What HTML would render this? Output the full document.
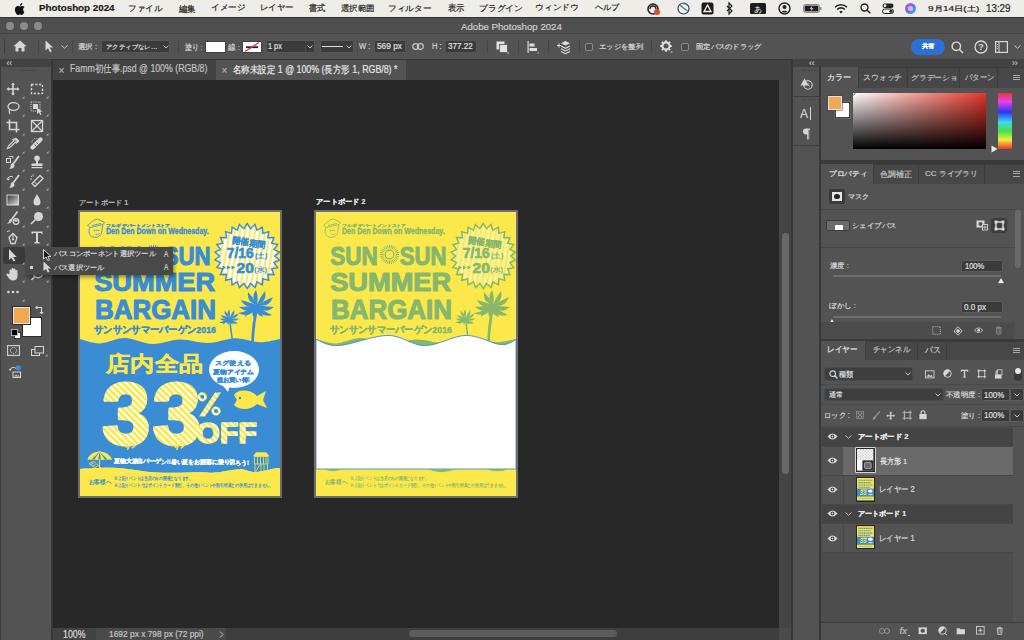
<!DOCTYPE html>
<html><head><meta charset="utf-8">
<style>
*{margin:0;padding:0;box-sizing:border-box}
html,body{width:1024px;height:640px;overflow:hidden;background:#282828;font-family:"Liberation Sans",sans-serif;}
.a{position:absolute}
.t{position:absolute;white-space:nowrap;line-height:1;-webkit-text-stroke:0.2px currentColor}
svg{position:absolute;overflow:visible}
</style></head><body>
<div class="a" style="left:0px;top:0px;width:1024px;height:17px;background:#efede8;"></div>
<div class="a" style="left:0px;top:17px;width:1024px;height:16px;background:#4f4f4f;border-top:1px solid #353535"></div>
<div class="a" style="left:0px;top:33px;width:1024px;height:26px;background:#535353;border-top:1px solid #454545"></div>
<div class="a" style="left:0px;top:59px;width:51px;height:581px;background:#535353;border-left:1px solid #3c3c3c"></div>
<div class="a" style="left:0px;top:59px;width:51px;height:8px;background:#424242;"></div>
<div class="a" style="left:51px;top:59px;width:2px;height:581px;background:#383838;"></div>
<div class="a" style="left:53px;top:59px;width:726px;height:21px;background:#424242;border-top:1px solid #383838"></div>
<div class="a" style="left:216px;top:60px;width:190px;height:20px;background:#535353;"></div>
<div class="a" style="left:53px;top:80px;width:726px;height:548px;background:#282828;"></div>
<div class="a" style="left:53px;top:628px;width:173px;height:12px;background:#424242;"></div>
<div class="a" style="left:95.8px;top:628px;width:130.6px;height:12px;background:#4a4a4a;"></div>
<div class="a" style="left:226px;top:628px;width:553px;height:12px;background:#3e3e3e;"></div>
<div class="a" style="left:409px;top:630px;width:208px;height:7px;background:#5c5c5c;border-radius:3.5px"></div>
<div class="a" style="left:779px;top:59px;width:12px;height:21px;background:#424242;border-top:1px solid #383838"></div>
<div class="a" style="left:779px;top:80px;width:12px;height:548px;background:#454545;"></div>
<div class="a" style="left:779px;top:628px;width:12px;height:12px;background:#4a4a4a;"></div>
<div class="a" style="left:781.7px;top:232.8px;width:7px;height:240.8px;background:#686868;border-radius:3.5px"></div>
<div class="a" style="left:791px;top:59px;width:2px;height:581px;background:#383838;"></div>
<div class="a" style="left:793px;top:59px;width:231px;height:8px;background:#424242;"></div>
<div class="a" style="left:793px;top:67px;width:26px;height:573px;background:#535353;"></div>
<div class="a" style="left:793px;top:96px;width:26px;height:1px;background:#3e3e3e;"></div>
<div class="a" style="left:819px;top:67px;width:2px;height:573px;background:#383838;"></div>
<div class="a" style="left:821px;top:67px;width:203px;height:573px;background:#535353;"></div>
<svg style="left:15px;top:3px;" width="10" height="12" viewBox="0 0 10 12"><path d="M8.2 6.4c0-1.5 1.2-2.2 1.3-2.3-.7-1-1.8-1.2-2.2-1.2-.9-.1-1.8.6-2.3.6-.5 0-1.2-.5-2-.5C1.9 3 .9 3.6.4 4.6c-1 1.8-.3 4.4.7 5.8.5.7 1 1.5 1.8 1.5.7 0 1-.5 1.9-.5.9 0 1.1.5 1.9.5.8 0 1.3-.7 1.8-1.4.6-.8.8-1.6.8-1.6S8.2 8.3 8.2 6.4zM6.7 1.9C7.1 1.4 7.4.7 7.3 0c-.6 0-1.4.4-1.8.9-.4.4-.7 1.1-.6 1.8.7.1 1.4-.3 1.8-.8z" fill="#111"/></svg>
<span id="t1" class="t" style="left:38.68px;top:2.98px;font-size:9.86px;color:#1a1a1a;font-weight:bold;transform:scaleX(0.9935);transform-origin:0 0;">Photoshop 2024</span>
<span id="t2" class="t" style="left:128.48px;top:4.99px;font-size:7.72px;color:#1f1f1f;font-weight:normal;transform:scaleX(1.0703);transform-origin:0 0;">ファイル</span>
<span id="t3" class="t" style="left:178.65px;top:4.66px;font-size:8.92px;color:#1f1f1f;font-weight:normal;transform:scaleX(0.9299);transform-origin:0 0;">編集</span>
<span id="t4" class="t" style="left:211.26px;top:3.87px;font-size:7.82px;color:#1f1f1f;font-weight:normal;transform:scaleX(1.0760);transform-origin:0 0;">イメージ</span>
<span id="t5" class="t" style="left:259.52px;top:3.87px;font-size:7.82px;color:#1f1f1f;font-weight:normal;transform:scaleX(1.0610);transform-origin:0 0;">レイヤー</span>
<span id="t6" class="t" style="left:308.72px;top:4.16px;font-size:8.92px;color:#1f1f1f;font-weight:normal;transform:scaleX(0.9196);transform-origin:0 0;">書式</span>
<span id="t7" class="t" style="left:341.00px;top:3.73px;font-size:8.42px;color:#1f1f1f;font-weight:normal;transform:scaleX(1.0551);transform-origin:0 0;">選択範囲</span>
<span id="t8" class="t" style="left:388.33px;top:4.80px;font-size:8.26px;color:#1f1f1f;font-weight:normal;transform:scaleX(1.0842);transform-origin:0 0;">フィルター</span>
<span id="t9" class="t" style="left:448.00px;top:3.72px;font-size:8.50px;color:#1f1f1f;font-weight:normal;transform:scaleX(0.9259);transform-origin:0 0;">表示</span>
<span id="t10" class="t" style="left:478.60px;top:4.84px;font-size:8.04px;color:#1f1f1f;font-weight:normal;transform:scaleX(1.0963);transform-origin:0 0;">プラグイン</span>
<span id="t11" class="t" style="left:535.31px;top:4.48px;font-size:8.12px;color:#1f1f1f;font-weight:normal;transform:scaleX(1.0978);transform-origin:0 0;">ウィンドウ</span>
<span id="t12" class="t" style="left:595.17px;top:4.37px;font-size:7.82px;color:#1f1f1f;font-weight:normal;transform:scaleX(1.0228);transform-origin:0 0;">ヘルプ</span>
<span id="t13" class="t" style="left:928.00px;top:4.52px;font-size:7.49px;color:#1f1f1f;font-weight:normal;transform:scaleX(1.3355);transform-origin:0 0;">9月14日(土)</span>
<span id="t14" class="t" style="left:986.27px;top:2.97px;font-size:10.51px;color:#1f1f1f;font-weight:normal;transform:scaleX(0.9319);transform-origin:0 0;">13:29</span>
<svg style="left:647px;top:3px;" width="14" height="12" viewBox="0 0 14 12"><circle cx="6" cy="6" r="5" fill="none" stroke="#222" stroke-width="1.6"/><path d="M3 6a3 3 0 0 1 6 0" fill="none" stroke="#222" stroke-width="1.3"/><circle cx="10" cy="9" r="3" fill="#e8472c"/></svg>
<svg style="left:677px;top:2px;" width="13" height="13" viewBox="0 0 13 13"><circle cx="6.5" cy="6.5" r="5.5" fill="#f4f4f4" stroke="#2b3f7a" stroke-width="1.2"/><path d="M3 3.5c2 .5 2.5 2 4 3s2.5 1 3.5 2.5" stroke="#3a8a5a" stroke-width="1.3" fill="none"/><path d="M6 1.5c1.5 1 3 .8 4.5 2" stroke="#5a7ac0" stroke-width="1" fill="none"/></svg>
<svg style="left:701px;top:2px;" width="13" height="13" viewBox="0 0 13 13"><rect x="0.5" y="0.5" width="12" height="12" rx="2" fill="#1c1c1c"/><path d="M6.5 3 L10 9.5 H3z" fill="none" stroke="#fff" stroke-width="1.3"/></svg>
<svg style="left:726px;top:2px;" width="8" height="13" viewBox="0 0 8 13"><path d="M1 4l5 5-3 3V1l3 3-5 5" fill="none" stroke="#222" stroke-width="1.2"/></svg>
<svg style="left:750px;top:3px;" width="16" height="11" viewBox="0 0 16 11"><rect x="0" y="0" width="16" height="11" rx="1.5" fill="#1c1c1c"/><text x="8" y="8.6" font-size="8" text-anchor="middle" fill="#fff">あ</text></svg>
<svg style="left:778px;top:2px;" width="13" height="13" viewBox="0 0 13 13"><circle cx="6.5" cy="6.5" r="5.5" fill="none" stroke="#222" stroke-width="1.4"/><circle cx="6.5" cy="5" r="2" fill="#222"/><path d="M3 10.5c1.5-2.5 5.5-2.5 7 0" fill="#222"/></svg>
<svg style="left:803px;top:4px;" width="19" height="9" viewBox="0 0 19 9"><rect x="0.5" y="0.5" width="16" height="8" rx="2" fill="#bdbdbd" stroke="#777" stroke-width="0.8"/><rect x="1.7" y="1.7" width="13.6" height="5.6" rx="1.2" fill="#1e1e1e"/><rect x="17.2" y="3" width="1.4" height="3" rx="0.5" fill="#888"/><path d="M9.8 1.6L6.5 4.8H8.8L7.3 7.6L10.6 4.2H8.3z" fill="#f0f0f0"/></svg>
<svg style="left:834px;top:3px;" width="14" height="11" viewBox="0 0 14 11"><path d="M1 4.2a8.5 8.5 0 0 1 12 0" fill="none" stroke="#222" stroke-width="1.6"/><path d="M3.2 6.5a5.3 5.3 0 0 1 7.6 0" fill="none" stroke="#222" stroke-width="1.6"/><path d="M5.3 8.8a2.3 2.3 0 0 1 3.4 0L7 10.5z" fill="#222"/></svg>
<svg style="left:860px;top:3px;" width="11" height="11" viewBox="0 0 11 11"><circle cx="4.5" cy="4.5" r="3.5" fill="none" stroke="#222" stroke-width="1.4"/><path d="M7 7l3.3 3.3" stroke="#222" stroke-width="1.5"/></svg>
<svg style="left:882px;top:3px;" width="12" height="11" viewBox="0 0 12 11"><rect x="0.5" y="0.5" width="11" height="4.5" rx="2.25" fill="#222"/><circle cx="3" cy="2.75" r="1.4" fill="#efede8"/><rect x="0.5" y="6" width="11" height="4.5" rx="2.25" fill="none" stroke="#222"/><circle cx="9" cy="8.25" r="1.6" fill="#222"/></svg>
<svg style="left:904px;top:2px;" width="13" height="13" viewBox="0 0 13 13"><defs><linearGradient id="sg" x1="0" y1="0" x2="1" y2="1"><stop offset="0" stop-color="#e24dd0"/><stop offset="0.5" stop-color="#6b6bf0"/><stop offset="1" stop-color="#38c6e8"/></linearGradient></defs><circle cx="6.5" cy="6.5" r="5.5" fill="url(#sg)"/><circle cx="6.5" cy="6.5" r="2.5" fill="#fff" opacity="0.6"/></svg>
<div class="a" style="left:6px;top:21.5px;width:8px;height:8px;background:#8a8a8a;border-radius:50%"></div>
<div class="a" style="left:20px;top:21.5px;width:8px;height:8px;background:#8a8a8a;border-radius:50%"></div>
<div class="a" style="left:34px;top:21.5px;width:8px;height:8px;background:#8a8a8a;border-radius:50%"></div>
<span id="t15" class="t" style="left:461.00px;top:21.98px;font-size:9.86px;color:#cfcfcf;font-weight:normal;transform:scaleX(0.9799);transform-origin:0 0;">Adobe Photoshop 2024</span>
<div class="a" style="left:4px;top:39px;width:1px;height:14px;background:#3f3f3f;"></div>
<div class="a" style="left:37.5px;top:39px;width:1px;height:14px;background:#474747;"></div>
<div class="a" style="left:72px;top:39px;width:1px;height:14px;background:#474747;"></div>
<svg style="left:13px;top:40px;" width="14" height="12" viewBox="0 0 14 12"><path d="M7 0.5 L13.5 6.2 H11.5 V11.5 H8.5 V8 H5.5 V11.5 H2.5 V6.2 H0.5z" fill="#d6d6d6"/></svg>
<svg style="left:45px;top:40px;" width="9" height="13" viewBox="0 0 9 13"><path d="M0.5 0.5 V10.5 L3 8.3 L5 12.3 L6.8 11.5 L4.8 7.5 H8.2z" fill="#d6d6d6"/></svg>
<svg style="left:61px;top:45px;" width="7" height="4" viewBox="0 0 7 4"><path d="M0.5 0.5 L3.5 3.2 L6.5 0.5" fill="none" stroke="#c8c8c8" stroke-width="1"/></svg>
<span id="t16" class="t" style="left:77.59px;top:43.18px;font-size:7.42px;color:#d6d6d6;font-weight:normal;transform:scaleX(1.0602);transform-origin:0 0;">選択 :</span>
<div class="a" style="left:101px;top:40px;width:69px;height:13px;background:#3b3b3b;border-radius:2px;border:1px solid #575757"></div>
<span id="t17" class="t" style="left:105.59px;top:44.35px;font-size:6.47px;color:#dedede;font-weight:normal;transform:scaleX(1.0625);transform-origin:0 0;">アクティブなレ…</span>
<svg style="left:163px;top:45px;" width="6" height="4" viewBox="0 0 6 4"><path d="M0.5 0.5 L3 3 L5.5 0.5" fill="none" stroke="#c8c8c8" stroke-width="1"/></svg>
<div class="a" style="left:178px;top:39px;width:1px;height:14px;background:#474747;"></div>
<span id="t18" class="t" style="left:185.00px;top:43.52px;font-size:7.83px;color:#d6d6d6;font-weight:normal;transform:scaleX(0.8616);transform-origin:0 0;">塗り :</span>
<div class="a" style="left:204.5px;top:40.5px;width:21px;height:12px;background:#414141;border-radius:2px"></div>
<div class="a" style="left:205.5px;top:41.5px;width:19px;height:10px;background:#ffffff;"></div>
<span id="t19" class="t" style="left:228.00px;top:44.02px;font-size:7.83px;color:#d6d6d6;font-weight:normal;transform:scaleX(0.9663);transform-origin:0 0;">線 :</span>
<div class="a" style="left:241.5px;top:40.5px;width:20px;height:12px;background:#414141;border-radius:2px"></div>
<svg style="left:242.5px;top:41.5px;" width="18" height="10" viewBox="0 0 18 10"><rect width="18" height="10" fill="#fff"/><rect x="3" y="4.3" width="12" height="1.8" fill="#222"/><path d="M16 0.5 L2 9.5" stroke="#e03030" stroke-width="1.2"/></svg>
<div class="a" style="left:265.5px;top:40px;width:49px;height:13px;background:#3b3b3b;border-radius:2px;border:1px solid #575757"></div>
<div class="a" style="left:304.5px;top:41px;width:1px;height:11px;background:#4a4a4a;"></div>
<span id="t20" class="t" style="left:268.13px;top:41.38px;font-size:9.51px;color:#e0e0e0;font-weight:normal;transform:scaleX(0.7683);transform-origin:0 0;">1 px</span>
<svg style="left:307px;top:45px;" width="6" height="4" viewBox="0 0 6 4"><path d="M0.5 0.5 L3 3 L5.5 0.5" fill="none" stroke="#c8c8c8" stroke-width="1"/></svg>
<div class="a" style="left:319.5px;top:40px;width:34px;height:13px;background:#3b3b3b;border-radius:2px;border:1px solid #575757"></div>
<div class="a" style="left:322px;top:46px;width:21px;height:1.3px;background:#e0e0e0;"></div>
<svg style="left:346px;top:45px;" width="6" height="4" viewBox="0 0 6 4"><path d="M0.5 0.5 L3 3 L5.5 0.5" fill="none" stroke="#c8c8c8" stroke-width="1"/></svg>
<div class="a" style="left:357px;top:39px;width:1px;height:14px;background:#474747;"></div>
<span id="t21" class="t" style="left:359.00px;top:41.94px;font-size:9.11px;color:#d6d6d6;font-weight:normal;transform:scaleX(0.8342);transform-origin:0 0;">W :</span>
<div class="a" style="left:374px;top:40px;width:32px;height:13px;background:#3b3b3b;border-radius:2px;border:1px solid #575757"></div>
<span id="t22" class="t" style="left:377.00px;top:42.32px;font-size:9.27px;color:#e0e0e0;font-weight:normal;transform:scaleX(0.8972);transform-origin:0 0;">569 px</span>
<svg style="left:412px;top:43px;" width="12" height="7" viewBox="0 0 12 7"><rect x="0.7" y="0.7" width="6" height="5.6" rx="2.8" fill="none" stroke="#c8c8c8" stroke-width="1.2"/><rect x="5.3" y="0.7" width="6" height="5.6" rx="2.8" fill="none" stroke="#c8c8c8" stroke-width="1.2"/></svg>
<span id="t23" class="t" style="left:432.00px;top:41.94px;font-size:9.11px;color:#d6d6d6;font-weight:normal;transform:scaleX(0.8228);transform-origin:0 0;">H :</span>
<div class="a" style="left:444.5px;top:40px;width:32.5px;height:13px;background:#3b3b3b;border-radius:2px;border:1px solid #575757"></div>
<span id="t24" class="t" style="left:447.56px;top:41.94px;font-size:9.11px;color:#e0e0e0;font-weight:normal;transform:scaleX(0.8862);transform-origin:0 0;">377.22</span>
<div class="a" style="left:486.5px;top:39px;width:1px;height:14px;background:#474747;"></div>
<svg style="left:496px;top:41px;" width="13" height="13" viewBox="0 0 13 13"><rect x="0.5" y="0.5" width="8" height="8" fill="#e0e0e0"/><rect x="3.5" y="3.5" width="8" height="8" fill="#e0e0e0" stroke="#535353" stroke-width="0.8"/><rect x="11" y="11.5" width="2" height="1" fill="#ccc"/></svg>
<div class="a" style="left:517.5px;top:39px;width:1px;height:14px;background:#474747;"></div>
<svg style="left:527px;top:41px;" width="12" height="13" viewBox="0 0 12 13"><rect x="0.5" y="0" width="1.2" height="12" fill="#ddd"/><rect x="2.5" y="2.5" width="5" height="3" fill="#ddd"/><rect x="2.5" y="7" width="7.5" height="3" fill="#ddd"/><rect x="10.5" y="11.5" width="1.5" height="1" fill="#ccc"/></svg>
<div class="a" style="left:548px;top:39px;width:1px;height:14px;background:#474747;"></div>
<svg style="left:556px;top:40px;" width="15" height="14" viewBox="0 0 15 14"><path d="M1 5.5h4M3 3.5v4" stroke="#ddd" stroke-width="1"/><path d="M9.5 1L14 3.3 9.5 5.6 5 3.3z" fill="#ddd"/><path d="M5 6l4.5 2.3L14 6M5 8.7l4.5 2.3L14 8.7M5 11.4l4.5 2.3L14 11.4" fill="none" stroke="#ddd" stroke-width="1.1"/></svg>
<div class="a" style="left:579px;top:39px;width:1px;height:14px;background:#474747;"></div>
<div class="a" style="left:584.5px;top:42.5px;width:8px;height:8px;background:#4a4a4a;border:1px solid #8a8a8a;border-radius:2px"></div>
<span id="t25" class="t" style="left:598.80px;top:42.70px;font-size:6.99px;color:#d6d6d6;font-weight:normal;transform:scaleX(1.0522);transform-origin:0 0;">エッジを整列</span>
<div class="a" style="left:651px;top:39px;width:1px;height:14px;background:#474747;"></div>
<svg style="left:660px;top:40px;" width="13" height="13" viewBox="0 0 13 13"><g transform="translate(6,6)"><circle r="3.6" fill="none" stroke="#ddd" stroke-width="2.2"/><g stroke="#ddd" stroke-width="1.8"><path d="M0-5.8V-3.8M0 5.8V3.8M-5.8 0H-3.8M5.8 0H3.8M-4.1-4.1l1.4 1.4M4.1 4.1l-1.4-1.4M-4.1 4.1l1.4-1.4M4.1-4.1l-1.4 1.4"/></g></g><rect x="10.5" y="11.5" width="2" height="1" fill="#ccc"/></svg>
<div class="a" style="left:680.5px;top:42.5px;width:8px;height:8px;background:#4a4a4a;border:1px solid #8a8a8a;border-radius:2px"></div>
<span id="t26" class="t" style="left:695.97px;top:43.12px;font-size:7.46px;color:#d6d6d6;font-weight:normal;transform:scaleX(1.0387);transform-origin:0 0;">固定パスのドラッグ</span>
<div class="a" style="left:911px;top:38.5px;width:33.5px;height:16px;background:#2c6fd6;border-radius:8px"></div>
<span id="t27" class="t" style="left:921.67px;top:43.38px;font-size:6.42px;color:#ffffff;font-weight:bold;transform:scaleX(1.0645);transform-origin:0 0;">共有</span>
<svg style="left:951px;top:41px;" width="13" height="13" viewBox="0 0 13 13"><circle cx="5.3" cy="5.3" r="4.2" fill="none" stroke="#d8d8d8" stroke-width="1.4"/><path d="M8.3 8.3L12 12" stroke="#d8d8d8" stroke-width="1.6"/></svg>
<svg style="left:974px;top:40px;" width="14" height="14" viewBox="0 0 14 14"><circle cx="7" cy="7" r="6" fill="none" stroke="#d8d8d8" stroke-width="1.3"/><text x="7" y="10.3" font-size="9" font-weight="bold" text-anchor="middle" fill="#d8d8d8" font-family="Liberation Sans">?</text></svg>
<svg style="left:995px;top:41px;" width="13" height="12" viewBox="0 0 13 12"><rect x="0.6" y="0.6" width="11.8" height="10.8" fill="none" stroke="#d8d8d8" stroke-width="1.2"/><path d="M4 1V11" stroke="#d8d8d8" stroke-width="1"/><path d="M1.8 3.5H3M1.8 5.5H3M1.8 7.5H3" stroke="#d8d8d8" stroke-width="0.8"/></svg>
<svg style="left:1014px;top:45px;" width="7" height="4" viewBox="0 0 7 4"><path d="M0.5 0.5 L3.5 3.2 L6.5 0.5" fill="none" stroke="#c8c8c8" stroke-width="1"/></svg>
<span id="t28" class="t" style="left:58.50px;top:66.03px;font-size:10.00px;color:#b5b5b5;font-weight:normal;">×</span>
<span id="t29" class="t" style="left:70.16px;top:64.44px;font-size:10.43px;color:#c4c4c4;font-weight:normal;transform:scaleX(0.8408);transform-origin:0 0;">Famm初仕事.psd @ 100% (RGB/8)</span>
<span id="t30" class="t" style="left:221.50px;top:66.03px;font-size:10.00px;color:#b5b5b5;font-weight:normal;">×</span>
<span id="t31" class="t" style="left:233.18px;top:64.94px;font-size:10.43px;color:#e8e8e8;font-weight:normal;transform:scaleX(0.8465);transform-origin:0 0;">名称未設定 1 @ 100% (長方形 1, RGB/8) *</span>
<span id="t32" class="t" style="left:6.50px;top:58.80px;font-size:8.50px;color:#c0c0c0;font-weight:normal;">‹‹</span>
<span id="t33" class="t" style="left:809.00px;top:58.80px;font-size:8.50px;color:#c0c0c0;font-weight:normal;">‹‹</span>
<span id="t34" class="t" style="left:1012.00px;top:58.80px;font-size:8.50px;color:#c0c0c0;font-weight:normal;">››</span>
<div class="a" style="left:19px;top:70px;width:2px;height:1px;background:#444;"></div>
<div class="a" style="left:802px;top:70px;width:2px;height:1px;background:#444;"></div>
<div class="a" style="left:802px;top:99px;width:2px;height:1px;background:#444;"></div>
<div class="a" style="left:22px;top:70px;width:2px;height:1px;background:#444;"></div>
<div class="a" style="left:805px;top:70px;width:2px;height:1px;background:#444;"></div>
<div class="a" style="left:805px;top:99px;width:2px;height:1px;background:#444;"></div>
<div class="a" style="left:25px;top:70px;width:2px;height:1px;background:#444;"></div>
<div class="a" style="left:808px;top:70px;width:2px;height:1px;background:#444;"></div>
<div class="a" style="left:808px;top:99px;width:2px;height:1px;background:#444;"></div>
<div class="a" style="left:28px;top:70px;width:2px;height:1px;background:#444;"></div>
<div class="a" style="left:811px;top:70px;width:2px;height:1px;background:#444;"></div>
<div class="a" style="left:811px;top:99px;width:2px;height:1px;background:#444;"></div>
<div class="a" style="left:31px;top:70px;width:2px;height:1px;background:#444;"></div>
<div class="a" style="left:814px;top:70px;width:2px;height:1px;background:#444;"></div>
<div class="a" style="left:814px;top:99px;width:2px;height:1px;background:#444;"></div>
<div class="a" style="left:34px;top:70px;width:2px;height:1px;background:#444;"></div>
<div class="a" style="left:817px;top:70px;width:2px;height:1px;background:#444;"></div>
<div class="a" style="left:817px;top:99px;width:2px;height:1px;background:#444;"></div>
<div class="a" style="left:3px;top:247px;width:21.5px;height:16.5px;background:#3b3b3b;border-radius:2px"></div>
<svg style="left:6px;top:82px;" width="14" height="14" viewBox="0 0 14 14"><path d="M7 0.5L9 2.8H7.8V6.2H11.2V5L13.5 7 11.2 9V7.8H7.8V11.2H9L7 13.5 5 11.2H6.2V7.8H2.8V9L0.5 7 2.8 5V6.2H6.2V2.8H5z" fill="#d6d6d6"/></svg>
<svg style="left:30px;top:82px;" width="14" height="14" viewBox="0 0 14 14"><rect x="1.5" y="2.5" width="11" height="9" fill="none" stroke="#d6d6d6" stroke-width="1.4" stroke-dasharray="2.2 1.6"/></svg>
<svg style="left:6px;top:100.5px;" width="14" height="14" viewBox="0 0 14 14"><ellipse cx="7.5" cy="5.5" rx="5.5" ry="3.8" fill="none" stroke="#d6d6d6" stroke-width="1.3"/><path d="M3.5 8.5c-1 1.5 0 3 .5 4.5" fill="none" stroke="#d6d6d6" stroke-width="1.2"/></svg>
<svg style="left:30px;top:100.5px;" width="14" height="14" viewBox="0 0 14 14"><rect x="1" y="1" width="9" height="9" fill="none" stroke="#d6d6d6" stroke-width="0.9" stroke-dasharray="1.2 1"/><rect x="3" y="3" width="5" height="5" fill="#d6d6d6"/><path d="M7 6.5V13L8.8 11.3 10.3 14 11.5 13.3 10 10.8H12.5z" fill="#d6d6d6"/></svg>
<svg style="left:6px;top:119px;" width="14" height="14" viewBox="0 0 14 14"><path d="M3.5 0.5V10.5H13.5M0.5 3.5H10.5V13.5" fill="none" stroke="#d6d6d6" stroke-width="1.6"/></svg>
<svg style="left:30px;top:119px;" width="14" height="14" viewBox="0 0 14 14"><rect x="1.5" y="1.5" width="11" height="11" fill="none" stroke="#d6d6d6" stroke-width="1.3"/><path d="M1.5 1.5L12.5 12.5M12.5 1.5L1.5 12.5" stroke="#d6d6d6" stroke-width="1.3"/></svg>
<svg style="left:6px;top:137px;" width="14" height="14" viewBox="0 0 14 14"><path d="M10 1.5l2.5 2.5-2 2-1-1-5.5 5.5-2.5 1 1-2.5 5.5-5.5-1-1z" fill="none" stroke="#d6d6d6" stroke-width="1.2"/><path d="M9 1.5l3.5 3.5" stroke="#d6d6d6" stroke-width="2.2"/></svg>
<svg style="left:30px;top:137px;" width="14" height="14" viewBox="0 0 14 14"><path d="M2.5 10.5L10.5 2.5" stroke="#d6d6d6" stroke-width="4.2" stroke-linecap="round"/><path d="M4.5 7.5l2 2M6.5 5.5l2 2" stroke="#535353" stroke-width="0.9"/><path d="M2 5.5a4 4 0 0 1 5-4" fill="none" stroke="#d6d6d6" stroke-width="0.9" stroke-dasharray="1 1"/></svg>
<svg style="left:6px;top:155px;" width="14" height="14" viewBox="0 0 14 14"><rect x="0.5" y="3.5" width="4" height="4" fill="none" stroke="#d6d6d6" stroke-width="1"/><path d="M3 1.5h4v2" fill="none" stroke="#d6d6d6" stroke-width="0.9"/><path d="M13 1L7.5 8.5" stroke="#d6d6d6" stroke-width="1.8"/><path d="M7.5 8c-2 0-3 1.5-3 3.5 0 1-.8 1.8-1.5 2.2 3 .5 5.5-.8 5.5-3.5z" fill="#d6d6d6"/></svg>
<svg style="left:30px;top:155px;" width="14" height="14" viewBox="0 0 14 14"><circle cx="7" cy="3.3" r="2.8" fill="#d6d6d6"/><path d="M6 5.5h2v3h4.5v2.5h-11v-2.5H6z" fill="#d6d6d6"/><rect x="1.5" y="12" width="11" height="1.2" fill="#d6d6d6"/></svg>
<svg style="left:6px;top:174px;" width="14" height="14" viewBox="0 0 14 14"><path d="M1 6a4 4 0 0 1 6-3" fill="none" stroke="#d6d6d6" stroke-width="1"/><path d="M1 4.5L2.5 6.5 4 4.5z" fill="#d6d6d6"/><path d="M13 1L7.5 8.5" stroke="#d6d6d6" stroke-width="1.8"/><path d="M7.5 8c-2 0-3 1.5-3 3.5 0 1-.8 1.8-1.5 2.2 3 .5 5.5-.8 5.5-3.5z" fill="#d6d6d6"/></svg>
<svg style="left:30px;top:174px;" width="14" height="14" viewBox="0 0 14 14"><path d="M5 12.5L13 4.5 10 1.5 2 9.5z" fill="none" stroke="#d6d6d6" stroke-width="1.3"/><path d="M4 7.5l3 3" stroke="#d6d6d6" stroke-width="1"/><path d="M1 2l1 1M3 0.5v2M0 5h2" stroke="#d6d6d6" stroke-width="0.9"/></svg>
<svg style="left:6px;top:192.5px;" width="14" height="14" viewBox="0 0 14 14"><defs><linearGradient id="gr1" x1="0" y1="0" x2="1" y2="1"><stop offset="0" stop-color="#333"/><stop offset="1" stop-color="#ddd"/></linearGradient></defs><rect x="1" y="2" width="11.5" height="10" fill="url(#gr1)" stroke="#d6d6d6" stroke-width="1"/></svg>
<svg style="left:30px;top:192.5px;" width="14" height="14" viewBox="0 0 14 14"><path d="M7 1C5 4.5 3.5 6.5 3.5 9a3.5 3.5 0 0 0 7 0C10.5 6.5 9 4.5 7 1z" fill="#d6d6d6"/></svg>
<svg style="left:6px;top:211px;" width="14" height="14" viewBox="0 0 14 14"><path d="M11.5 0.5L6 8" stroke="#d6d6d6" stroke-width="1.6"/><path d="M6 7.5c-2 0-3 1.5-3 3-.5 1-1 1.5-2 2 3 .3 4.5-1 5-3z" fill="#d6d6d6"/><circle cx="10" cy="10.5" r="2.8" fill="none" stroke="#d6d6d6" stroke-width="1.3"/><path d="M8 10.5a2 2 0 0 1 4 0z" fill="#d6d6d6"/></svg>
<svg style="left:30px;top:211px;" width="14" height="14" viewBox="0 0 14 14"><circle cx="8.5" cy="5.5" r="4.5" fill="#d6d6d6"/><path d="M5.5 8.5L1 13" stroke="#d6d6d6" stroke-width="1.6"/></svg>
<svg style="left:6px;top:229.5px;" width="14" height="14" viewBox="0 0 14 14"><path d="M7 3.5L11 7.5 9 13.5H5L3 7.5z" fill="none" stroke="#d6d6d6" stroke-width="1.3"/><path d="M7 3.5V9" stroke="#d6d6d6" stroke-width="1"/><circle cx="7" cy="9.5" r="1" fill="#d6d6d6"/><path d="M1 1l1 1M3 0v2" stroke="#d6d6d6" stroke-width="0.9"/></svg>
<svg style="left:30px;top:229.5px;" width="14" height="14" viewBox="0 0 14 14"><path d="M1.5 1.5H12.5V4H11.5L11 3H8V12H9.5V13.5H4.5V12H6V3H3L2.5 4H1.5z" fill="#d6d6d6"/></svg>
<svg style="left:6px;top:248px;" width="14" height="14" viewBox="0 0 14 14"><path d="M3 1V12L5.5 9.8 7.5 13.6 9.3 12.8 7.3 9.1H10.8z" fill="#d6d6d6"/></svg>
<svg style="left:6px;top:266.5px;" width="14" height="14" viewBox="0 0 14 14"><path d="M3.5 7V3.5a1 1 0 0 1 2 0V6.5V2a1 1 0 0 1 2 0V6.5V2.5a1 1 0 0 1 2 0V7V4a1 1 0 0 1 2 0V9c0 3-2 4.5-4.5 4.5S3.5 12 2 10L.5 8a1 1 0 0 1 1.5-1.3z" fill="#d6d6d6"/></svg>
<svg style="left:6px;top:285px;" width="14" height="14" viewBox="0 0 14 14"><circle cx="2.5" cy="7" r="1.3" fill="#d6d6d6"/><circle cx="7" cy="7" r="1.3" fill="#d6d6d6"/><circle cx="11.5" cy="7" r="1.3" fill="#d6d6d6"/></svg>
<svg style="left:21.5px;top:95.5px;" width="2.5" height="2.5" viewBox="0 0 2.5 2.5"><path d="M2.5 0V2.5H0z" fill="#a8a8a8"/></svg>
<svg style="left:45.5px;top:95.5px;" width="2.5" height="2.5" viewBox="0 0 2.5 2.5"><path d="M2.5 0V2.5H0z" fill="#a8a8a8"/></svg>
<svg style="left:21.5px;top:114.0px;" width="2.5" height="2.5" viewBox="0 0 2.5 2.5"><path d="M2.5 0V2.5H0z" fill="#a8a8a8"/></svg>
<svg style="left:45.5px;top:114.0px;" width="2.5" height="2.5" viewBox="0 0 2.5 2.5"><path d="M2.5 0V2.5H0z" fill="#a8a8a8"/></svg>
<svg style="left:21.5px;top:132.5px;" width="2.5" height="2.5" viewBox="0 0 2.5 2.5"><path d="M2.5 0V2.5H0z" fill="#a8a8a8"/></svg>
<svg style="left:45.5px;top:132.5px;" width="2.5" height="2.5" viewBox="0 0 2.5 2.5"><path d="M2.5 0V2.5H0z" fill="#a8a8a8"/></svg>
<svg style="left:21.5px;top:150.5px;" width="2.5" height="2.5" viewBox="0 0 2.5 2.5"><path d="M2.5 0V2.5H0z" fill="#a8a8a8"/></svg>
<svg style="left:45.5px;top:150.5px;" width="2.5" height="2.5" viewBox="0 0 2.5 2.5"><path d="M2.5 0V2.5H0z" fill="#a8a8a8"/></svg>
<svg style="left:21.5px;top:168.5px;" width="2.5" height="2.5" viewBox="0 0 2.5 2.5"><path d="M2.5 0V2.5H0z" fill="#a8a8a8"/></svg>
<svg style="left:45.5px;top:168.5px;" width="2.5" height="2.5" viewBox="0 0 2.5 2.5"><path d="M2.5 0V2.5H0z" fill="#a8a8a8"/></svg>
<svg style="left:21.5px;top:187.5px;" width="2.5" height="2.5" viewBox="0 0 2.5 2.5"><path d="M2.5 0V2.5H0z" fill="#a8a8a8"/></svg>
<svg style="left:45.5px;top:187.5px;" width="2.5" height="2.5" viewBox="0 0 2.5 2.5"><path d="M2.5 0V2.5H0z" fill="#a8a8a8"/></svg>
<svg style="left:21.5px;top:206.0px;" width="2.5" height="2.5" viewBox="0 0 2.5 2.5"><path d="M2.5 0V2.5H0z" fill="#a8a8a8"/></svg>
<svg style="left:45.5px;top:206.0px;" width="2.5" height="2.5" viewBox="0 0 2.5 2.5"><path d="M2.5 0V2.5H0z" fill="#a8a8a8"/></svg>
<svg style="left:21.5px;top:224.5px;" width="2.5" height="2.5" viewBox="0 0 2.5 2.5"><path d="M2.5 0V2.5H0z" fill="#a8a8a8"/></svg>
<svg style="left:45.5px;top:224.5px;" width="2.5" height="2.5" viewBox="0 0 2.5 2.5"><path d="M2.5 0V2.5H0z" fill="#a8a8a8"/></svg>
<svg style="left:21.5px;top:243.0px;" width="2.5" height="2.5" viewBox="0 0 2.5 2.5"><path d="M2.5 0V2.5H0z" fill="#a8a8a8"/></svg>
<svg style="left:45.5px;top:243.0px;" width="2.5" height="2.5" viewBox="0 0 2.5 2.5"><path d="M2.5 0V2.5H0z" fill="#a8a8a8"/></svg>
<svg style="left:21.5px;top:261.5px;" width="2.5" height="2.5" viewBox="0 0 2.5 2.5"><path d="M2.5 0V2.5H0z" fill="#a8a8a8"/></svg>
<svg style="left:21.5px;top:280.0px;" width="2.5" height="2.5" viewBox="0 0 2.5 2.5"><path d="M2.5 0V2.5H0z" fill="#a8a8a8"/></svg>
<svg style="left:21.5px;top:298.5px;" width="2.5" height="2.5" viewBox="0 0 2.5 2.5"><path d="M2.5 0V2.5H0z" fill="#a8a8a8"/></svg>
<svg style="left:30px;top:268px;" width="14" height="14" viewBox="0 0 14 14"><circle cx="8" cy="5.5" r="4.3" fill="none" stroke="#d6d6d6" stroke-width="1.4"/><path d="M4.8 8.7L1.5 12" stroke="#d6d6d6" stroke-width="1.7"/></svg>
<svg style="left:45.5px;top:280.0px;" width="2.5" height="2.5" viewBox="0 0 2.5 2.5"><path d="M2.5 0V2.5H0z" fill="#a8a8a8"/></svg>
<div class="a" style="left:23px;top:317.8px;width:18px;height:18px;background:#ffffff;outline:1px solid #2e2e2e;box-shadow:0 0 0 1px #2e2e2e"></div>
<div class="a" style="left:12.8px;top:306.8px;width:17.6px;height:17.5px;background:#f2a852;border:1px solid #e6e6e6;box-shadow:0 0 0 1px #2e2e2e"></div>
<svg style="left:35px;top:305px;" width="9" height="10" viewBox="0 0 9 10"><path d="M1 2.5H6.5V8" fill="none" stroke="#d6d6d6" stroke-width="1.1"/><path d="M0 2.5L2.5 0.5V4.5z M4.5 7H8.5L6.5 9.5z" fill="#d6d6d6"/></svg>
<svg style="left:10.5px;top:329px;" width="10" height="10" viewBox="0 0 10 10"><rect x="3.5" y="3.5" width="6" height="6" fill="#fff" stroke="#222" stroke-width="0.8"/><rect x="0.5" y="0.5" width="6" height="6" fill="#000" stroke="#ccc" stroke-width="0.8"/></svg>
<svg style="left:7px;top:345px;" width="13" height="11" viewBox="0 0 13 11"><rect x="0.6" y="0.6" width="11.8" height="9.8" fill="none" stroke="#d6d6d6" stroke-width="1.1"/><circle cx="6.5" cy="5.5" r="3" fill="none" stroke="#d6d6d6" stroke-width="1" stroke-dasharray="1.2 0.8"/></svg>
<svg style="left:30.5px;top:345.5px;" width="13" height="10" viewBox="0 0 13 10"><rect x="0.5" y="3.5" width="8" height="6" fill="#535353" stroke="#d6d6d6" stroke-width="1"/><rect x="4" y="0.5" width="8.5" height="6.5" fill="#535353" stroke="#d6d6d6" stroke-width="1"/></svg>
<svg style="left:44.5px;top:353.5px;" width="2.5" height="2.5" viewBox="0 0 2.5 2.5"><path d="M2.5 0V2.5H0z" fill="#a8a8a8"/></svg>
<svg style="left:7.5px;top:365px;" width="14" height="13" viewBox="0 0 14 13"><path d="M2 5a3.5 3.5 0 0 1 6-1.5" fill="none" stroke="#d6d6d6" stroke-width="1"/><path d="M1 4l1.2 2.2L3.5 4z" fill="#d6d6d6"/><rect x="5" y="7" width="7.5" height="5.5" fill="none" stroke="#d6d6d6" stroke-width="1"/><path d="M6 11.5l2-2 1.5 1.5 1-1 1.5 1.5z" fill="#d6d6d6"/><circle cx="10.3" cy="2.8" r="2.5" fill="#3d8bf0"/></svg>
<svg width="0" height="0" style="left:0;top:0"><defs>
<pattern id="sbB" patternUnits="userSpaceOnUse" width="5" height="60" patternTransform="rotate(10)"><rect width="5" height="60" fill="#ffffff"/><rect width="1.8" height="60" fill="#fbe94b"/></pattern>
<pattern id="sbG" patternUnits="userSpaceOnUse" width="5" height="60" patternTransform="rotate(10)"><rect width="5" height="60" fill="#f7f2a0"/><rect width="1.8" height="60" fill="#fbe94b"/></pattern>
<pattern id="strp" patternUnits="userSpaceOnUse" width="4.6" height="40" patternTransform="rotate(-45)"><rect width="4.6" height="40" fill="#ffffff"/><rect width="2.7" height="40" fill="#fbe94b"/></pattern>
</defs></svg>
<div class="a" style="left:78px;top:210px;width:204px;height:288px;background:#6d6d72;"></div>
<div class="a" style="left:314px;top:210px;width:204px;height:288px;background:#6d6d72;"></div>
<span id="t35" class="t" style="left:79.33px;top:198.55px;font-size:7.19px;color:#cbcbcb;font-weight:normal;transform:scaleX(1.0311);transform-origin:0 0;">アートボード 1</span>
<span id="t36" class="t" style="left:316.30px;top:199.02px;font-size:6.77px;color:#e4e4e4;font-weight:bold;transform:scaleX(1.0359);transform-origin:0 0;">アートボード 2</span>
<svg style="left:80px;top:212px;overflow:hidden" width="200" height="284" viewBox="0 0 200 284"><rect width="200" height="284" fill="#fbe94b"/><path d="M0.00 127.00 C3.33 127.73 12.53 131.57 20.00 131.40 C27.47 131.23 36.02 125.90 44.80 126.00 C53.58 126.10 63.50 131.75 72.70 132.00 C81.90 132.25 90.73 127.67 100.00 127.50 C109.27 127.33 119.03 131.20 128.30 131.00 C137.57 130.80 147.03 126.42 155.60 126.30 C164.17 126.18 172.30 130.18 179.70 130.30 C187.10 130.42 196.62 127.55 200.00 127.00 L200 256.3 C199.17 256.32 199.17 255.78 195.00 256.40 C190.83 257.02 180.83 259.87 175.00 260.00 C169.17 260.13 166.67 257.10 160.00 257.20 C153.33 257.30 141.67 260.08 135.00 260.60 C128.33 261.12 129.67 260.30 120.00 260.30 C110.33 260.30 90.67 261.32 77.00 260.60 C63.33 259.88 50.83 256.62 38.00 256.00 C25.17 255.38 6.33 256.75 0.00 256.90 Z" fill="#3a8dd5"/><g fill="none" stroke="#3a8dd5" stroke-width="0.8" stroke-linejoin="round"><path d="M7.5 13.5 L14 8 L17.5 7 L24.5 10.5 L23 12.5 L10 15.5z"/><path d="M10 15.5 C8 19 9 24 13 25 C18 26.5 22.5 23 22 17 L23 12.5"/><path d="M12 13.5 L21 11.5"/><path d="M16 18.5 q1.5 -1 3 0 M15.5 22 q2 1.2 4 -0.5"/><circle cx="14.5" cy="18.5" r="0.5"/></g><text x="26" y="14.6" font-size="4.3" fill="#3a8dd5" stroke="#3a8dd5" stroke-width="0.15" textLength="64" lengthAdjust="spacingAndGlyphs" font-weight="bold">フルギ デパートメントストア</text><text x="26" y="22" font-size="8.3" fill="#3a8dd5" stroke="#3a8dd5" stroke-width="0.35" textLength="102.7" lengthAdjust="spacingAndGlyphs" font-weight="bold">Den Den Down on Wednesday.</text><text x="14.2" y="52.7" font-size="26.7" font-weight="bold" fill="#3a8dd5" stroke="#3a8dd5" stroke-width="1.1" stroke-linejoin="round" textLength="47.6" lengthAdjust="spacingAndGlyphs">SUN</text><circle cx="73.5" cy="42.5" r="4.4" fill="none" stroke="#3a8dd5" stroke-width="1.3"/><path d="M79.70 42.50L83.10 42.50M79.54 43.88L82.86 44.64M79.09 45.19L82.15 46.67M78.35 46.37L81.01 48.49M77.37 47.35L79.49 50.01M76.19 48.09L77.67 51.15M74.88 48.54L75.64 51.86M73.50 48.70L73.50 52.10M72.12 48.54L71.36 51.86M70.81 48.09L69.33 51.15M69.63 47.35L67.51 50.01M68.65 46.37L65.99 48.49M67.91 45.19L64.85 46.67M67.46 43.88L64.14 44.64M67.30 42.50L63.90 42.50M67.46 41.12L64.14 40.36M67.91 39.81L64.85 38.33M68.65 38.63L65.99 36.51M69.63 37.65L67.51 34.99M70.81 36.91L69.33 33.85M72.12 36.46L71.36 33.14M73.50 36.30L73.50 32.90M74.88 36.46L75.64 33.14M76.19 36.91L77.67 33.85M77.37 37.65L79.49 34.99M78.35 38.63L81.01 36.51M79.09 39.81L82.15 38.33M79.54 41.12L82.86 40.36" stroke="#3a8dd5" stroke-width="0.9"/><text x="83.7" y="52.7" font-size="26.7" font-weight="bold" fill="#3a8dd5" stroke="#3a8dd5" stroke-width="1.1" stroke-linejoin="round" textLength="46.9" lengthAdjust="spacingAndGlyphs">SUN</text><text x="14.2" y="79.3" font-size="25.7" font-weight="bold" fill="#3a8dd5" stroke="#3a8dd5" stroke-width="1.1" stroke-linejoin="round" textLength="121" lengthAdjust="spacingAndGlyphs">SUMMER</text><text x="15" y="107.4" font-size="26.9" font-weight="bold" fill="#3a8dd5" stroke="#3a8dd5" stroke-width="1.1" stroke-linejoin="round" textLength="121" lengthAdjust="spacingAndGlyphs">BARGAIN</text><text x="14.2" y="120.7" font-size="9.5" font-weight="bold" fill="#3a8dd5" stroke="#3a8dd5" stroke-width="0.4" textLength="121.8" lengthAdjust="spacingAndGlyphs">サンサンサマーバーゲン2016</text><polygon points="167.20,11.50 170.51,16.70 174.98,12.44 176.95,18.29 182.30,15.22 182.82,21.37 188.75,19.67 187.78,25.76 193.95,25.54 191.55,31.22 197.59,32.48 193.90,37.42 199.46,40.08 194.70,44.00 199.46,47.92 193.90,50.58 197.59,55.52 191.55,56.78 193.95,62.46 187.78,62.24 188.75,68.33 182.82,66.63 182.30,72.78 176.95,69.71 174.98,75.56 170.51,71.30 167.20,76.50 163.89,71.30 159.42,75.56 157.45,69.71 152.10,72.78 151.58,66.63 145.65,68.33 146.62,62.24 140.45,62.46 142.85,56.78 136.81,55.52 140.50,50.58 134.94,47.92 139.70,44.00 134.94,40.08 140.50,37.42 136.81,32.48 142.85,31.22 140.45,25.54 146.62,25.76 145.65,19.67 151.58,21.37 152.10,15.22 157.45,18.29 159.42,12.44 163.89,16.70" fill="#d8c43a" opacity="0.6" transform="translate(1,1.2)"/><polygon points="167.20,11.50 170.51,16.70 174.98,12.44 176.95,18.29 182.30,15.22 182.82,21.37 188.75,19.67 187.78,25.76 193.95,25.54 191.55,31.22 197.59,32.48 193.90,37.42 199.46,40.08 194.70,44.00 199.46,47.92 193.90,50.58 197.59,55.52 191.55,56.78 193.95,62.46 187.78,62.24 188.75,68.33 182.82,66.63 182.30,72.78 176.95,69.71 174.98,75.56 170.51,71.30 167.20,76.50 163.89,71.30 159.42,75.56 157.45,69.71 152.10,72.78 151.58,66.63 145.65,68.33 146.62,62.24 140.45,62.46 142.85,56.78 136.81,55.52 140.50,50.58 134.94,47.92 139.70,44.00 134.94,40.08 140.50,37.42 136.81,32.48 142.85,31.22 140.45,25.54 146.62,25.76 145.65,19.67 151.58,21.37 152.10,15.22 157.45,18.29 159.42,12.44 163.89,16.70" fill="url(#sbB)" stroke="#3a8dd5" stroke-width="1.4" stroke-linejoin="miter"/><text x="152.3" y="33.5" font-size="8.6" font-weight="bold" fill="#3a8dd5" stroke="#3a8dd5" stroke-width="0.25" textLength="34.2" lengthAdjust="spacingAndGlyphs" transform="rotate(7 169 29)">開催期間</text><text x="146.8" y="46.3" font-size="15.3" font-weight="bold" fill="#3a8dd5" stroke="#3a8dd5" stroke-width="0.7" textLength="26.9" lengthAdjust="spacingAndGlyphs">7/16</text><text x="174.9" y="45.7" font-size="7" font-weight="bold" fill="#3a8dd5" textLength="12.8" lengthAdjust="spacingAndGlyphs">(土)</text><path d="M142.5 53.5 l3.6 2 -3.6 2z M147 53.5 l3.6 2 -3.6 2z M151.5 53.5 l3.6 2 -3.6 2z" fill="#3a8dd5"/><text x="156.6" y="61" font-size="15.3" font-weight="bold" fill="#3a8dd5" stroke="#3a8dd5" stroke-width="0.7" textLength="17.1" lengthAdjust="spacingAndGlyphs">20</text><text x="174.3" y="60.4" font-size="7" font-weight="bold" fill="#3a8dd5" textLength="12.7" lengthAdjust="spacingAndGlyphs">(水)</text><path d="M177.00 93.00 Q168.55 99.49 158.00 101.00 Q171.89 107.41 177.00 93.00 z" fill="#3a8dd5"/><path d="M177.00 93.00 Q169.09 90.21 161.00 88.00 Q166.52 98.42 177.00 93.00 z" fill="#3a8dd5"/><path d="M177.00 93.00 Q173.57 85.76 168.00 80.00 Q166.50 90.66 177.00 93.00 z" fill="#3a8dd5"/><path d="M177.00 93.00 Q178.79 85.35 176.00 78.00 Q170.21 85.92 177.00 93.00 z" fill="#3a8dd5"/><path d="M177.00 93.00 Q187.34 89.62 185.00 79.00 Q179.87 85.36 177.00 93.00 z" fill="#3a8dd5"/><path d="M177.00 93.00 Q188.71 96.42 193.00 85.00 Q184.87 88.73 177.00 93.00 z" fill="#3a8dd5"/><path d="M177.00 93.00 Q184.41 103.24 194.00 95.00 Q185.42 94.70 177.00 93.00 z" fill="#3a8dd5"/><path d="M177.00 93.00 Q178.79 106.57 192.00 103.00 Q183.56 99.41 177.00 93.00 z" fill="#3a8dd5"/><path d="M177.00 93.00 Q165.84 93.84 165.00 105.00 Q171.92 99.92 177.00 93.00 z" fill="#3a8dd5"/><path d="M177.00 93.00 Q169.36 98.08 174.00 106.00 Q177.74 100.02 177.00 93.00 z" fill="#3a8dd5"/><path d="M177.00 93.00 Q173.47 102.26 183.00 105.00 Q181.16 98.42 177.00 93.00 z" fill="#3a8dd5"/><path d="M177.00 93.00 Q168.08 94.70 159.00 95.00 Q169.03 103.24 177.00 93.00 z" fill="#3a8dd5"/><circle cx="177.00" cy="94.00" r="2.50" fill="#3a8dd5"/><path d="M175.70 95.00 Q171.70 112.00 171.20 131.00 L173.80 131.00 Q174.56 112.00 178.30 95.00 z" fill="#3a8dd5"/><path d="M149.70 105.70 Q144.98 109.33 139.08 110.17 Q146.84 113.76 149.70 105.70 z" fill="#3a8dd5"/><path d="M149.70 105.70 Q145.28 104.14 140.76 102.91 Q143.85 108.73 149.70 105.70 z" fill="#3a8dd5"/><path d="M149.70 105.70 Q147.78 101.65 144.67 98.44 Q143.83 104.39 149.70 105.70 z" fill="#3a8dd5"/><path d="M149.70 105.70 Q150.70 101.42 149.14 97.32 Q145.91 101.74 149.70 105.70 z" fill="#3a8dd5"/><path d="M149.70 105.70 Q155.48 103.81 154.17 97.88 Q151.30 101.43 149.70 105.70 z" fill="#3a8dd5"/><path d="M149.70 105.70 Q156.24 107.61 158.64 101.23 Q154.10 103.31 149.70 105.70 z" fill="#3a8dd5"/><path d="M149.70 105.70 Q153.84 111.42 159.20 106.82 Q154.40 106.65 149.70 105.70 z" fill="#3a8dd5"/><path d="M149.70 105.70 Q150.70 113.28 158.08 111.29 Q153.36 109.28 149.70 105.70 z" fill="#3a8dd5"/><path d="M149.70 105.70 Q143.46 106.17 142.99 112.41 Q146.86 109.57 149.70 105.70 z" fill="#3a8dd5"/><path d="M149.70 105.70 Q145.43 108.54 148.02 112.96 Q150.11 109.62 149.70 105.70 z" fill="#3a8dd5"/><path d="M149.70 105.70 Q147.73 110.88 153.05 112.41 Q152.03 108.73 149.70 105.70 z" fill="#3a8dd5"/><path d="M149.70 105.70 Q144.71 106.65 139.64 106.82 Q145.24 111.42 149.70 105.70 z" fill="#3a8dd5"/><circle cx="149.70" cy="106.70" r="1.40" fill="#3a8dd5"/><path d="M148.97 107.70 Q149.87 116.85 151.67 128.00 L153.13 128.00 Q151.47 116.85 150.43 107.70 z" fill="#3a8dd5"/><text x="26.4" y="159" font-size="21" font-weight="bold" fill="#fbe94b" stroke="#fbe94b" stroke-width="0.3" textLength="96.4" lengthAdjust="spacingAndGlyphs">店内全品</text><ellipse cx="154" cy="157.5" rx="25" ry="18.5" fill="#fff"/><path d="M140 170 L148 180 L150 172z" fill="#fff"/><text x="135" y="153" font-size="6.3" font-weight="bold" fill="#3a8dd5" stroke="#3a8dd5" stroke-width="0.25" textLength="36" lengthAdjust="spacingAndGlyphs">スグ使える</text><text x="133" y="161.5" font-size="6.3" font-weight="bold" fill="#3a8dd5" stroke="#3a8dd5" stroke-width="0.25" textLength="41" lengthAdjust="spacingAndGlyphs">夏物アイテム</text><text x="137" y="170" font-size="6.3" font-weight="bold" fill="#3a8dd5" stroke="#3a8dd5" stroke-width="0.25" textLength="33" lengthAdjust="spacingAndGlyphs">超お買い得!</text><path d="M154 183 C158 177 170 177 177 184 L186 179 L183 188 L187 196 L177 192 C170 199 159 198 154 193 L157 188z" fill="#fbe94b"/><circle cx="160" cy="186" r="1.2" fill="#3a8dd5"/><text x="22" y="231.7" font-size="87" font-weight="bold" fill="url(#strp)" stroke="url(#strp)" stroke-width="3.2" stroke-linejoin="round">3</text><text x="72.5" y="231.7" font-size="87" font-weight="bold" fill="url(#strp)" stroke="url(#strp)" stroke-width="3.2" stroke-linejoin="round">3</text><g fill="none" stroke="url(#strp)" stroke-width="2.6"><circle cx="122.3" cy="184.8" r="3.3"/><circle cx="136" cy="199" r="3.3"/></g><path d="M119 204.5 L125 204.5 L141 180.5 L135 180.5z" fill="url(#strp)"/><text x="116" y="231.4" font-size="29.5" font-weight="bold" fill="url(#strp)" stroke="url(#strp)" stroke-width="1.6" stroke-linejoin="round" textLength="61" lengthAdjust="spacingAndGlyphs">OFF</text><text x="45" y="236.5" font-size="6.5" font-weight="bold" fill="#fbe94b" stroke="#fbe94b" stroke-width="0.3" textLength="12" lengthAdjust="spacingAndGlyphs" transform="rotate(-8 51 234)">サン</text><text x="93.5" y="236.5" font-size="6.5" font-weight="bold" fill="#fbe94b" stroke="#fbe94b" stroke-width="0.3" textLength="12" lengthAdjust="spacingAndGlyphs" transform="rotate(-8 99 234)">サン</text><path d="M7.5 248 Q9 240.5 19.5 239.3 Q30 240.5 32 248 Q29.5 247 27 248 Q24.5 247 22 248 Q19.5 247 17 248 Q14.5 247 12 248 Q9.5 247 7.5 248z" fill="#fbe94b"/><path d="M19.5 240 L11.5 247.6 L14.3 247.4z M19.5 240 L18.2 247.5 L21 247.5z M19.5 240 L25 247.4 L27.8 247.6z" fill="#3a8dd5"/><path d="M19.5 247.5 V256" stroke="#fbe94b" stroke-width="0.9"/><g stroke="#fbe94b" stroke-width="0.8" fill="none"><path d="M9 251.5 L14 249.5 L21 256 L30 256.5 L28.5 258.5 L18 258.5z"/><path d="M11 252.3L13.5 251.2M13 253.8L15.5 252.6M15 255.5L17.5 254.2M20 257.5L22.5 256.3"/></g><text x="34" y="251.8" font-size="6" font-weight="bold" fill="#fff" stroke="#fff" stroke-width="0.25" textLength="135" lengthAdjust="spacingAndGlyphs" transform="rotate(0.8 100 250)">夏物大放出バーゲン!!暑い夏をお洒落に乗り切ろう!</text><path d="M173 244.3 L176 240.2 H186 L189.5 244.3z" fill="#fbe94b"/><g stroke="#fbe94b" stroke-width="0.8" fill="none"><path d="M174.5 244.5 H188 V252 H174.5z M177.5 244.5V252 M180.5 244.5V252 M183.5 244.5V252 M186 244.5V252"/><path d="M175 252 V261 M187.5 252 V261 M181 252 V261 M184 252 V261 M175.5 260 L179.5 253"/></g><path d="M0 284 V256.9  C6.33 256.75 25.17 255.38 38.00 256.00 C50.83 256.62 63.33 259.88 77.00 260.60 C90.67 261.32 110.33 260.30 120.00 260.30 C129.67 260.30 128.33 261.12 135.00 260.60 C141.67 260.08 153.33 257.30 160.00 257.20 C166.67 257.10 169.17 260.13 175.00 260.00 C180.83 259.87 190.83 257.02 195.00 256.40 C199.17 255.78 199.17 256.32 200.00 256.30 V284z" fill="#fbe94b"/><text x="8.8" y="272.3" font-size="6.2" font-weight="bold" fill="#3a8dd5" textLength="22.5" lengthAdjust="spacingAndGlyphs">お客様へ</text><text x="34" y="267.8" font-size="4.6" font-weight="bold" fill="#3a8dd5" textLength="79" lengthAdjust="spacingAndGlyphs">※上記イベントは当店のみの開催となります。</text><text x="34" y="275.3" font-size="4.6" font-weight="bold" fill="#3a8dd5" textLength="159" lengthAdjust="spacingAndGlyphs">※上記イベントではポイントカード割引、その他イベントや割引特典との併用はできません。</text></svg>
<svg style="left:316px;top:212px;overflow:hidden" width="200" height="284" viewBox="0 0 200 284"><rect width="200" height="284" fill="#fbe94b"/><g fill="none" stroke="#86b76d" stroke-width="0.8" stroke-linejoin="round"><path d="M7.5 13.5 L14 8 L17.5 7 L24.5 10.5 L23 12.5 L10 15.5z"/><path d="M10 15.5 C8 19 9 24 13 25 C18 26.5 22.5 23 22 17 L23 12.5"/><path d="M12 13.5 L21 11.5"/><path d="M16 18.5 q1.5 -1 3 0 M15.5 22 q2 1.2 4 -0.5"/><circle cx="14.5" cy="18.5" r="0.5"/></g><text x="26" y="14.6" font-size="4.3" fill="#86b76d" stroke="#86b76d" stroke-width="0.15" textLength="64" lengthAdjust="spacingAndGlyphs" font-weight="bold">フルギ デパートメントストア</text><text x="26" y="22" font-size="8.3" fill="#86b76d" stroke="#86b76d" stroke-width="0.35" textLength="102.7" lengthAdjust="spacingAndGlyphs" font-weight="bold">Den Den Down on Wednesday.</text><text x="14.2" y="52.7" font-size="26.7" font-weight="bold" fill="#86b76d" stroke="#86b76d" stroke-width="1.1" stroke-linejoin="round" textLength="47.6" lengthAdjust="spacingAndGlyphs">SUN</text><circle cx="73.5" cy="42.5" r="4.4" fill="none" stroke="#86b76d" stroke-width="1.3"/><path d="M79.70 42.50L83.10 42.50M79.54 43.88L82.86 44.64M79.09 45.19L82.15 46.67M78.35 46.37L81.01 48.49M77.37 47.35L79.49 50.01M76.19 48.09L77.67 51.15M74.88 48.54L75.64 51.86M73.50 48.70L73.50 52.10M72.12 48.54L71.36 51.86M70.81 48.09L69.33 51.15M69.63 47.35L67.51 50.01M68.65 46.37L65.99 48.49M67.91 45.19L64.85 46.67M67.46 43.88L64.14 44.64M67.30 42.50L63.90 42.50M67.46 41.12L64.14 40.36M67.91 39.81L64.85 38.33M68.65 38.63L65.99 36.51M69.63 37.65L67.51 34.99M70.81 36.91L69.33 33.85M72.12 36.46L71.36 33.14M73.50 36.30L73.50 32.90M74.88 36.46L75.64 33.14M76.19 36.91L77.67 33.85M77.37 37.65L79.49 34.99M78.35 38.63L81.01 36.51M79.09 39.81L82.15 38.33M79.54 41.12L82.86 40.36" stroke="#86b76d" stroke-width="0.9"/><text x="83.7" y="52.7" font-size="26.7" font-weight="bold" fill="#86b76d" stroke="#86b76d" stroke-width="1.1" stroke-linejoin="round" textLength="46.9" lengthAdjust="spacingAndGlyphs">SUN</text><text x="14.2" y="79.3" font-size="25.7" font-weight="bold" fill="#86b76d" stroke="#86b76d" stroke-width="1.1" stroke-linejoin="round" textLength="121" lengthAdjust="spacingAndGlyphs">SUMMER</text><text x="15" y="107.4" font-size="26.9" font-weight="bold" fill="#86b76d" stroke="#86b76d" stroke-width="1.1" stroke-linejoin="round" textLength="121" lengthAdjust="spacingAndGlyphs">BARGAIN</text><text x="14.2" y="120.7" font-size="9.5" font-weight="bold" fill="#86b76d" stroke="#86b76d" stroke-width="0.4" textLength="121.8" lengthAdjust="spacingAndGlyphs">サンサンサマーバーゲン2016</text><polygon points="167.20,11.50 170.51,16.70 174.98,12.44 176.95,18.29 182.30,15.22 182.82,21.37 188.75,19.67 187.78,25.76 193.95,25.54 191.55,31.22 197.59,32.48 193.90,37.42 199.46,40.08 194.70,44.00 199.46,47.92 193.90,50.58 197.59,55.52 191.55,56.78 193.95,62.46 187.78,62.24 188.75,68.33 182.82,66.63 182.30,72.78 176.95,69.71 174.98,75.56 170.51,71.30 167.20,76.50 163.89,71.30 159.42,75.56 157.45,69.71 152.10,72.78 151.58,66.63 145.65,68.33 146.62,62.24 140.45,62.46 142.85,56.78 136.81,55.52 140.50,50.58 134.94,47.92 139.70,44.00 134.94,40.08 140.50,37.42 136.81,32.48 142.85,31.22 140.45,25.54 146.62,25.76 145.65,19.67 151.58,21.37 152.10,15.22 157.45,18.29 159.42,12.44 163.89,16.70" fill="#d8c43a" opacity="0.6" transform="translate(1,1.2)"/><polygon points="167.20,11.50 170.51,16.70 174.98,12.44 176.95,18.29 182.30,15.22 182.82,21.37 188.75,19.67 187.78,25.76 193.95,25.54 191.55,31.22 197.59,32.48 193.90,37.42 199.46,40.08 194.70,44.00 199.46,47.92 193.90,50.58 197.59,55.52 191.55,56.78 193.95,62.46 187.78,62.24 188.75,68.33 182.82,66.63 182.30,72.78 176.95,69.71 174.98,75.56 170.51,71.30 167.20,76.50 163.89,71.30 159.42,75.56 157.45,69.71 152.10,72.78 151.58,66.63 145.65,68.33 146.62,62.24 140.45,62.46 142.85,56.78 136.81,55.52 140.50,50.58 134.94,47.92 139.70,44.00 134.94,40.08 140.50,37.42 136.81,32.48 142.85,31.22 140.45,25.54 146.62,25.76 145.65,19.67 151.58,21.37 152.10,15.22 157.45,18.29 159.42,12.44 163.89,16.70" fill="url(#sbG)" stroke="#86b76d" stroke-width="1.4" stroke-linejoin="miter"/><text x="152.3" y="33.5" font-size="8.6" font-weight="bold" fill="#86b76d" stroke="#86b76d" stroke-width="0.25" textLength="34.2" lengthAdjust="spacingAndGlyphs" transform="rotate(7 169 29)">開催期間</text><text x="146.8" y="46.3" font-size="15.3" font-weight="bold" fill="#86b76d" stroke="#86b76d" stroke-width="0.7" textLength="26.9" lengthAdjust="spacingAndGlyphs">7/16</text><text x="174.9" y="45.7" font-size="7" font-weight="bold" fill="#86b76d" textLength="12.8" lengthAdjust="spacingAndGlyphs">(土)</text><path d="M142.5 53.5 l3.6 2 -3.6 2z M147 53.5 l3.6 2 -3.6 2z M151.5 53.5 l3.6 2 -3.6 2z" fill="#86b76d"/><text x="156.6" y="61" font-size="15.3" font-weight="bold" fill="#86b76d" stroke="#86b76d" stroke-width="0.7" textLength="17.1" lengthAdjust="spacingAndGlyphs">20</text><text x="174.3" y="60.4" font-size="7" font-weight="bold" fill="#86b76d" textLength="12.7" lengthAdjust="spacingAndGlyphs">(水)</text><path d="M177.00 93.00 Q168.55 99.49 158.00 101.00 Q171.89 107.41 177.00 93.00 z" fill="#86b76d"/><path d="M177.00 93.00 Q169.09 90.21 161.00 88.00 Q166.52 98.42 177.00 93.00 z" fill="#86b76d"/><path d="M177.00 93.00 Q173.57 85.76 168.00 80.00 Q166.50 90.66 177.00 93.00 z" fill="#86b76d"/><path d="M177.00 93.00 Q178.79 85.35 176.00 78.00 Q170.21 85.92 177.00 93.00 z" fill="#86b76d"/><path d="M177.00 93.00 Q187.34 89.62 185.00 79.00 Q179.87 85.36 177.00 93.00 z" fill="#86b76d"/><path d="M177.00 93.00 Q188.71 96.42 193.00 85.00 Q184.87 88.73 177.00 93.00 z" fill="#86b76d"/><path d="M177.00 93.00 Q184.41 103.24 194.00 95.00 Q185.42 94.70 177.00 93.00 z" fill="#86b76d"/><path d="M177.00 93.00 Q178.79 106.57 192.00 103.00 Q183.56 99.41 177.00 93.00 z" fill="#86b76d"/><path d="M177.00 93.00 Q165.84 93.84 165.00 105.00 Q171.92 99.92 177.00 93.00 z" fill="#86b76d"/><path d="M177.00 93.00 Q169.36 98.08 174.00 106.00 Q177.74 100.02 177.00 93.00 z" fill="#86b76d"/><path d="M177.00 93.00 Q173.47 102.26 183.00 105.00 Q181.16 98.42 177.00 93.00 z" fill="#86b76d"/><path d="M177.00 93.00 Q168.08 94.70 159.00 95.00 Q169.03 103.24 177.00 93.00 z" fill="#86b76d"/><circle cx="177.00" cy="94.00" r="2.50" fill="#86b76d"/><path d="M175.70 95.00 Q171.70 112.00 171.20 131.00 L173.80 131.00 Q174.56 112.00 178.30 95.00 z" fill="#86b76d"/><path d="M149.70 105.70 Q144.98 109.33 139.08 110.17 Q146.84 113.76 149.70 105.70 z" fill="#86b76d"/><path d="M149.70 105.70 Q145.28 104.14 140.76 102.91 Q143.85 108.73 149.70 105.70 z" fill="#86b76d"/><path d="M149.70 105.70 Q147.78 101.65 144.67 98.44 Q143.83 104.39 149.70 105.70 z" fill="#86b76d"/><path d="M149.70 105.70 Q150.70 101.42 149.14 97.32 Q145.91 101.74 149.70 105.70 z" fill="#86b76d"/><path d="M149.70 105.70 Q155.48 103.81 154.17 97.88 Q151.30 101.43 149.70 105.70 z" fill="#86b76d"/><path d="M149.70 105.70 Q156.24 107.61 158.64 101.23 Q154.10 103.31 149.70 105.70 z" fill="#86b76d"/><path d="M149.70 105.70 Q153.84 111.42 159.20 106.82 Q154.40 106.65 149.70 105.70 z" fill="#86b76d"/><path d="M149.70 105.70 Q150.70 113.28 158.08 111.29 Q153.36 109.28 149.70 105.70 z" fill="#86b76d"/><path d="M149.70 105.70 Q143.46 106.17 142.99 112.41 Q146.86 109.57 149.70 105.70 z" fill="#86b76d"/><path d="M149.70 105.70 Q145.43 108.54 148.02 112.96 Q150.11 109.62 149.70 105.70 z" fill="#86b76d"/><path d="M149.70 105.70 Q147.73 110.88 153.05 112.41 Q152.03 108.73 149.70 105.70 z" fill="#86b76d"/><path d="M149.70 105.70 Q144.71 106.65 139.64 106.82 Q145.24 111.42 149.70 105.70 z" fill="#86b76d"/><circle cx="149.70" cy="106.70" r="1.40" fill="#86b76d"/><path d="M148.97 107.70 Q149.87 116.85 151.67 128.00 L153.13 128.00 Q151.47 116.85 150.43 107.70 z" fill="#86b76d"/><path d="M0.00 127.00 C3.33 127.73 12.53 131.57 20.00 131.40 C27.47 131.23 36.02 125.90 44.80 126.00 C53.58 126.10 63.50 131.75 72.70 132.00 C81.90 132.25 90.73 127.67 100.00 127.50 C109.27 127.33 119.03 131.20 128.30 131.00 C137.57 130.80 147.03 126.42 155.60 126.30 C164.17 126.18 172.30 130.18 179.70 130.30 C187.10 130.42 196.62 127.55 200.00 127.00 L200 140 L0 140z" fill="#86b76d"/><path d="M0.00 127.50 C3.78 128.52 10.70 134.28 22.70 133.60 C34.70 132.92 57.65 123.40 72.00 123.40 C86.35 123.40 95.80 133.60 108.80 133.60 C121.80 133.60 137.35 123.57 150.00 123.40 C162.65 123.23 176.37 131.92 184.70 132.60 C193.03 133.28 197.45 128.35 200.00 127.50 L200 257 L0 257z" fill="#fff" stroke="#3a8dd5" stroke-width="0.9"/><path d="M8 257 q8 4.5 18 0z M111 257 q14 6.5 29 0z M170 257 q11 4.5 23 0z" fill="#86b76d"/><text x="8.8" y="272.3" font-size="6.2" font-weight="bold" fill="#86b76d" textLength="22.5" lengthAdjust="spacingAndGlyphs">お客様へ</text><text x="34" y="267.8" font-size="4.6" font-weight="bold" fill="#86b76d" textLength="79" lengthAdjust="spacingAndGlyphs">※上記イベントは当店のみの開催となります。</text><text x="34" y="275.3" font-size="4.6" font-weight="bold" fill="#86b76d" textLength="159" lengthAdjust="spacingAndGlyphs">※上記イベントではポイントカード割引、その他イベントや割引特典との併用はできません。</text></svg>
<div class="a" style="left:26px;top:247px;width:146.5px;height:27.5px;background:#494949;box-shadow:1px 2px 4px rgba(0,0,0,0.45)"></div>
<svg style="left:43px;top:249px;" width="9" height="12" viewBox="0 0 9 12"><path d="M0.5 0.5V10L3 8 4.8 11.5 6.5 10.8 4.8 7.5H8z" fill="#1a1a1a" stroke="#e8e8e8" stroke-width="0.9"/></svg>
<svg style="left:43px;top:261px;" width="9" height="12" viewBox="0 0 9 12"><path d="M0.5 0.5V10L3 8 4.8 11.5 6.5 10.8 4.8 7.5H8z" fill="#d6d6d6"/></svg>
<div class="a" style="left:30px;top:265.5px;width:3px;height:3px;background:#d0d0d0;"></div>
<span id="t37" class="t" style="left:54.00px;top:251.18px;font-size:7.12px;color:#dadada;font-weight:normal;transform:scaleX(1.0416);transform-origin:0 0;">パスコンポーネント選択ツール</span>
<span id="t38" class="t" style="left:54.00px;top:264.78px;font-size:7.12px;color:#dadada;font-weight:normal;transform:scaleX(1.0280);transform-origin:0 0;">パス選択ツール</span>
<span id="t39" class="t" style="left:163.64px;top:249.87px;font-size:9.19px;color:#dadada;font-weight:normal;transform:scaleX(0.6944);transform-origin:0 0;">A</span>
<span id="t40" class="t" style="left:163.64px;top:263.27px;font-size:9.19px;color:#dadada;font-weight:normal;transform:scaleX(0.6944);transform-origin:0 0;">A</span>
<span id="t41" class="t" style="left:63.22px;top:628.97px;font-size:10.52px;color:#dadada;font-weight:normal;transform:scaleX(0.8381);transform-origin:0 0;">100%</span>
<span id="t42" class="t" style="left:108.77px;top:630.21px;font-size:8.60px;color:#c4c4c4;font-weight:normal;transform:scaleX(0.9758);transform-origin:0 0;">1692 px x 798 px (72 ppi)</span>
<svg style="left:219px;top:631px;" width="5" height="7" viewBox="0 0 5 7"><path d="M1 0.5L4 3.5 1 6.5" stroke="#bdbdbd" fill="none" stroke-width="1"/></svg>
<svg style="left:800px;top:78px;" width="13" height="12" viewBox="0 0 13 12"><path d="M4.5 0.5L8.5 7.5H0.5z" fill="#d6d6d6"/><circle cx="8" cy="7" r="4.2" fill="none" stroke="#d6d6d6" stroke-width="1.1"/><path d="M8 4.8V7.2L9.5 8.3" stroke="#d6d6d6" stroke-width="0.9" fill="none"/></svg>
<span id="t43" class="t" style="left:800.00px;top:108.34px;font-size:12.00px;color:#d6d6d6;font-weight:normal;">A</span>
<div class="a" style="left:809.5px;top:107px;width:1px;height:13px;background:#d6d6d6;"></div>
<svg style="left:801.5px;top:128px;" width="9" height="12" viewBox="0 0 9 12"><path d="M8 0.5H4a3 3 0 0 0 0 6h1.2V11.5h1.4V1.8h1.2V11.5H8z" fill="#d6d6d6"/></svg>
<div class="a" style="left:793px;top:145px;width:26px;height:1px;background:#3e3e3e;"></div>
<div class="a" style="left:821px;top:67px;width:203px;height:20.5px;background:#474747;border-top:1px solid #3c3c3c"></div>
<div class="a" style="left:821px;top:67px;width:37px;height:20.5px;background:#535353;"></div>
<div class="a" style="left:1012.6px;top:74.65px;width:7.3px;height:1.1px;background:#a8a8a8;"></div>
<div class="a" style="left:1012.6px;top:76.85000000000001px;width:7.3px;height:1.1px;background:#a8a8a8;"></div>
<div class="a" style="left:1012.6px;top:79.05000000000001px;width:7.3px;height:1.1px;background:#a8a8a8;"></div>
<div class="a" style="left:906.5px;top:68px;width:1px;height:19.5px;background:#3c3c3c;"></div>
<div class="a" style="left:959px;top:68px;width:1px;height:19.5px;background:#3c3c3c;"></div>
<div class="a" style="left:997px;top:68px;width:1px;height:19.5px;background:#3c3c3c;"></div>
<div class="a" style="left:857.5px;top:68px;width:1px;height:19.5px;background:#3c3c3c;"></div>
<span id="t44" class="t" style="left:826.97px;top:73.77px;font-size:8.20px;color:#e8e8e8;font-weight:normal;transform:scaleX(1.0000);transform-origin:0 0;">カラー</span>
<span id="t45" class="t" style="left:863.04px;top:74.31px;font-size:7.68px;color:#c0c0c0;font-weight:normal;transform:scaleX(0.9805);transform-origin:0 0;">スウォッチ</span>
<span id="t46" class="t" style="left:910.91px;top:74.09px;font-size:7.02px;color:#c0c0c0;font-weight:normal;transform:scaleX(1.1167);transform-origin:0 0;">グラデーショ</span>
<span id="t47" class="t" style="left:964.62px;top:74.00px;font-size:7.58px;color:#c0c0c0;font-weight:normal;transform:scaleX(0.9290);transform-origin:0 0;">パターン</span>
<div class="a" style="left:834.5px;top:101.5px;width:15px;height:16px;background:#ffffff;border:1px solid #444;box-shadow:0 0 0 0.5px #777"></div>
<div class="a" style="left:828px;top:96px;width:13.5px;height:13.5px;background:#f2aa52;border:1px solid #e0e0e0;box-shadow:0 0 0 0.5px #444"></div>
<div class="a" style="left:853.3px;top:93px;width:133px;height:56px;background:linear-gradient(to bottom, rgba(0,0,0,0) 0%, #000 100%), linear-gradient(to right, #ffffff 0%, #e3352a 100%)"></div>
<svg style="left:853.3px;top:93px;" width="6" height="6" viewBox="0 0 6 6"><path d="M0 3.5A3.5 3.5 0 0 0 3.5 0" fill="none" stroke="#fff" stroke-width="1.1"/><path d="M0 2.2A2.2 2.2 0 0 0 2.2 0" fill="none" stroke="#222" stroke-width="0.6"/></svg>
<div class="a" style="left:998.3px;top:93px;width:13.5px;height:56px;background:linear-gradient(to bottom,#e6383c 0%,#ee40e8 15%,#2a36ee 34%,#3ed8f0 52%,#46e046 68%,#eeee40 84%,#f08a30 92%,#e6383c 100%)"></div>
<svg style="left:990.5px;top:145px;" width="7" height="8" viewBox="0 0 7 8"><path d="M0.5 0.5 L6.5 4 L0.5 7.5z" fill="#eee"/></svg>
<div class="a" style="left:821px;top:160px;width:203px;height:3.5px;background:#3a3a3a;"></div>
<div class="a" style="left:821px;top:163.5px;width:203px;height:20.5px;background:#474747;border-top:1px solid #3c3c3c"></div>
<div class="a" style="left:821px;top:163.5px;width:52px;height:20.5px;background:#535353;"></div>
<div class="a" style="left:1012.6px;top:171.15px;width:7.3px;height:1.1px;background:#a8a8a8;"></div>
<div class="a" style="left:1012.6px;top:173.35px;width:7.3px;height:1.1px;background:#a8a8a8;"></div>
<div class="a" style="left:1012.6px;top:175.55px;width:7.3px;height:1.1px;background:#a8a8a8;"></div>
<div class="a" style="left:873px;top:164.5px;width:1px;height:19.5px;background:#3c3c3c;"></div>
<div class="a" style="left:917.6px;top:164.5px;width:1px;height:19.5px;background:#3c3c3c;"></div>
<div class="a" style="left:983.7px;top:164.5px;width:1px;height:19.5px;background:#3c3c3c;"></div>
<span id="t48" class="t" style="left:828.96px;top:169.92px;font-size:7.21px;color:#e8e8e8;font-weight:normal;transform:scaleX(1.1008);transform-origin:0 0;">プロパティ</span>
<span id="t49" class="t" style="left:880.00px;top:170.77px;font-size:8.12px;color:#c0c0c0;font-weight:normal;transform:scaleX(0.9867);transform-origin:0 0;">色調補正</span>
<span id="t50" class="t" style="left:924.82px;top:170.42px;font-size:7.21px;color:#c0c0c0;font-weight:normal;transform:scaleX(1.1124);transform-origin:0 0;">CC ライブラリ</span>
<div class="a" style="left:829px;top:188.5px;width:15.5px;height:15.5px;background:#3a3a3a;border-radius:2px"></div>
<div class="a" style="left:831.5px;top:192px;width:10.5px;height:8.5px;background:#e6e6e6;"></div>
<div class="a" style="left:833.7px;top:193.6px;width:6px;height:5.3px;background:#222;border-radius:50%"></div>
<span id="t51" class="t" style="left:848.45px;top:193.83px;font-size:7.12px;color:#d6d6d6;font-weight:normal;transform:scaleX(1.0257);transform-origin:0 0;">マスク</span>
<div class="a" style="left:821px;top:208.5px;width:194px;height:1px;background:#474747;"></div>
<div class="a" style="left:826px;top:219.5px;width:23.5px;height:11.5px;background:#6b6b6b;border:1px solid #3a3a3a;border-radius:2px"></div>
<div class="a" style="left:835.2px;top:224.8px;width:7.8px;height:5.4px;background:#ffffff;border-radius:1px 1px 0 0"></div>
<span id="t52" class="t" style="left:851.90px;top:223.12px;font-size:6.77px;color:#d6d6d6;font-weight:normal;transform:scaleX(1.0597);transform-origin:0 0;">シェイプパス</span>
<svg style="left:976px;top:219px;" width="12" height="12" viewBox="0 0 12 12"><rect x="0.5" y="1.5" width="8" height="7" fill="#d6d6d6"/><circle cx="4.5" cy="5" r="2" fill="#535353"/><rect x="6.5" y="5.5" width="5" height="5.5" fill="#535353" stroke="#d6d6d6" stroke-width="0.9"/><path d="M9 6.5v3.5M7.2 8.2h3.5" stroke="#d6d6d6" stroke-width="0.8"/></svg>
<div class="a" style="left:991px;top:217.5px;width:16px;height:15px;background:#3c3c3c;border-radius:2px"></div>
<svg style="left:993.5px;top:219.5px;" width="11" height="11" viewBox="0 0 11 11"><rect x="2" y="2" width="7" height="7" fill="none" stroke="#d6d6d6" stroke-width="1.5"/><rect x="0.5" y="0.5" width="3" height="3" fill="#d6d6d6"/><rect x="7.5" y="0.5" width="3" height="3" fill="#d6d6d6"/><rect x="0.5" y="7.5" width="3" height="3" fill="#d6d6d6"/><rect x="7.5" y="7.5" width="3" height="3" fill="#d6d6d6"/></svg>
<div class="a" style="left:821px;top:246.5px;width:194px;height:1px;background:#474747;"></div>
<span id="t53" class="t" style="left:829.99px;top:262.11px;font-size:6.99px;color:#d6d6d6;font-weight:normal;transform:scaleX(1.0438);transform-origin:0 0;">濃度 :</span>
<div class="a" style="left:961px;top:260px;width:42px;height:12px;background:#3b3b3b;border:1px solid #5c5c5c;border-radius:2px"></div>
<span id="t54" class="t" style="left:964.51px;top:262.45px;font-size:8.61px;color:#e0e0e0;font-weight:normal;transform:scaleX(0.8718);transform-origin:0 0;">100%</span>
<div class="a" style="left:833px;top:274.5px;width:168px;height:2px;background:#6e6e6e;border-radius:1px"></div>
<svg style="left:997px;top:277px;" width="8" height="7" viewBox="0 0 8 7"><path d="M4 0.5 L7.5 6.5 H0.5z" fill="#f0f0f0" stroke="#333" stroke-width="0.5"/></svg>
<span id="t55" class="t" style="left:828.99px;top:302.48px;font-size:7.20px;color:#d6d6d6;font-weight:normal;transform:scaleX(1.0728);transform-origin:0 0;">ぼかし :</span>
<div class="a" style="left:961px;top:300.5px;width:42px;height:12px;background:#3b3b3b;border:1px solid #5c5c5c;border-radius:2px"></div>
<span id="t56" class="t" style="left:964.32px;top:302.93px;font-size:8.93px;color:#e0e0e0;font-weight:normal;transform:scaleX(0.9015);transform-origin:0 0;">0.0 px</span>
<div class="a" style="left:833px;top:315.5px;width:168px;height:2px;background:#6e6e6e;border-radius:1px"></div>
<svg style="left:828px;top:317.5px;" width="8" height="5" viewBox="0 0 8 5"><path d="M4 0.5 L7.5 6.5 H0.5z" fill="#f0f0f0" stroke="#333" stroke-width="0.5"/></svg>
<div class="a" style="left:1014.5px;top:210px;width:6.5px;height:58px;background:#6a6a6a;border-radius:3px"></div>
<div class="a" style="left:821px;top:321.5px;width:194px;height:17px;background:#4c4c4c;"></div>
<svg style="left:932.3px;top:325.8px;" width="9" height="9" viewBox="0 0 12 12"><rect x="1" y="1" width="10" height="10" fill="none" stroke="#d6d6d6" stroke-width="1" stroke-dasharray="1.4 1.2"/></svg>
<svg style="left:952.8px;top:325.5px;" width="10" height="9.2" viewBox="0 0 13 12"><path d="M6.5 1L12 6.5 6.5 12 1 6.5z" fill="none" stroke="#d6d6d6" stroke-width="1.2"/><path d="M6.5 3.5L9.5 6.5 6.5 9.5 3.5 6.5z" fill="#d6d6d6"/></svg>
<svg style="left:973.6px;top:327px;" width="9.2" height="6.4" viewBox="0 0 13 9"><path d="M0.5 4.5Q6.5-2 12.5 4.5Q6.5 11 0.5 4.5z" fill="none" stroke="#d6d6d6" stroke-width="1.1"/><circle cx="6.5" cy="4.5" r="2" fill="#d6d6d6"/></svg>
<svg style="left:995px;top:325.5px;" width="7.5" height="8.9" viewBox="0 0 11 13"><path d="M1 2.5H10M4 2.5V1H7V2.5M2 3.5L2.7 12H8.3L9 3.5z" fill="none" stroke="#9a9a9a" stroke-width="1"/><path d="M4.3 5V10.5M6.7 5V10.5" stroke="#9a9a9a" stroke-width="0.8"/></svg>
<div class="a" style="left:821px;top:338.5px;width:203px;height:2px;background:#3a3a3a;"></div>
<div class="a" style="left:821px;top:340.5px;width:203px;height:19.5px;background:#474747;border-top:1px solid #3c3c3c"></div>
<div class="a" style="left:821px;top:340.5px;width:44px;height:19.5px;background:#535353;"></div>
<div class="a" style="left:1012.6px;top:347.65px;width:7.3px;height:1.1px;background:#a8a8a8;"></div>
<div class="a" style="left:1012.6px;top:349.84999999999997px;width:7.3px;height:1.1px;background:#a8a8a8;"></div>
<div class="a" style="left:1012.6px;top:352.04999999999995px;width:7.3px;height:1.1px;background:#a8a8a8;"></div>
<div class="a" style="left:865px;top:341.5px;width:1px;height:18.5px;background:#3c3c3c;"></div>
<div class="a" style="left:917px;top:341.5px;width:1px;height:18.5px;background:#3c3c3c;"></div>
<div class="a" style="left:946px;top:341.5px;width:1px;height:18.5px;background:#3c3c3c;"></div>
<span id="t57" class="t" style="left:827.16px;top:345.44px;font-size:8.36px;color:#e8e8e8;font-weight:normal;transform:scaleX(0.9488);transform-origin:0 0;">レイヤー</span>
<span id="t58" class="t" style="left:872.55px;top:345.45px;font-size:8.35px;color:#c0c0c0;font-weight:normal;transform:scaleX(0.9371);transform-origin:0 0;">チャンネル</span>
<span id="t59" class="t" style="left:924.89px;top:345.82px;font-size:9.16px;color:#c0c0c0;font-weight:normal;transform:scaleX(0.8755);transform-origin:0 0;">パス</span>
<div class="a" style="left:823.5px;top:367px;width:89.5px;height:13.5px;background:#3e3e3e;border:1px solid #4a4a4a;border-radius:3px"></div>
<svg style="left:829px;top:369.5px;" width="9" height="9" viewBox="0 0 9 9"><circle cx="3.7" cy="3.7" r="2.8" fill="none" stroke="#d6d6d6" stroke-width="1.1"/><path d="M5.7 5.7L8.5 8.5" stroke="#d6d6d6" stroke-width="1.3"/></svg>
<span id="t60" class="t" style="left:839.31px;top:370.75px;font-size:7.69px;color:#dcdcdc;font-weight:normal;transform:scaleX(0.9078);transform-origin:0 0;">種類</span>
<svg style="left:905px;top:372px;" width="6" height="4" viewBox="0 0 6 4"><path d="M0.5 0.5 L3 3 L5.5 0.5" fill="none" stroke="#c8c8c8" stroke-width="1"/></svg>
<svg style="left:925px;top:369.5px;" width="9.5" height="8.7" viewBox="0 0 12 11"><rect x="0.6" y="1" width="10.8" height="9" fill="none" stroke="#d6d6d6" stroke-width="1.1"/><path d="M2 8.5L4.5 5.5 6.5 7.5 8 6 10 8.5z" fill="#d6d6d6"/></svg>
<svg style="left:942.5px;top:369.3px;" width="9" height="9" viewBox="0 0 11 11"><circle cx="5.5" cy="5.5" r="4.6" fill="none" stroke="#d6d6d6" stroke-width="1.1"/><path d="M5.5 0.9A4.6 4.6 0 0 0 5.5 10.1z" fill="#d6d6d6" transform="rotate(45 5.5 5.5)"/></svg>
<svg style="left:959.7px;top:369.3px;" width="9" height="9" viewBox="0 0 11 11"><path d="M1 1H10V3.5H9L8.5 2.5H6.3V9.5H7.5V10.5H3.5V9.5H4.7V2.5H2.5L2 3.5H1z" fill="#d6d6d6"/></svg>
<svg style="left:976.5px;top:369.3px;" width="9.5" height="9.5" viewBox="0 0 11 11"><rect x="2" y="2" width="7" height="7" fill="none" stroke="#d6d6d6" stroke-width="1.1"/><path d="M0.5 2H3M8 2h2.5M0.5 9H3M8 9h2.5M2 0.5V3M9 0.5V3M2 8v2.5M9 8v2.5" stroke="#d6d6d6" stroke-width="1"/></svg>
<svg style="left:994.3px;top:368.8px;" width="8.5" height="10" viewBox="0 0 10 12"><path d="M1 6.5h8v5H1z" fill="#d6d6d6"/><path d="M2.5 6.5V4a2.5 2.5 0 0 1 5 0" fill="none" stroke="#d6d6d6" stroke-width="1.3"/><rect x="4" y="1" width="5.5" height="6" fill="#535353" stroke="#d6d6d6" stroke-width="0.9"/></svg>
<div class="a" style="left:1013.5px;top:367.5px;width:8px;height:13px;background:#3a3a3a;border-radius:4px"></div>
<div class="a" style="left:1014.5px;top:367.5px;width:6px;height:6px;background:#e8e8e8;border-radius:50%"></div>
<div class="a" style="left:823.5px;top:387.5px;width:120px;height:13.5px;background:#3e3e3e;border:1px solid #4a4a4a;border-radius:3px"></div>
<span id="t61" class="t" style="left:828.74px;top:390.91px;font-size:7.29px;color:#dcdcdc;font-weight:normal;transform:scaleX(1.0148);transform-origin:0 0;">通常</span>
<svg style="left:935px;top:392.5px;" width="6" height="4" viewBox="0 0 6 4"><path d="M0.5 0.5 L3 3 L5.5 0.5" fill="none" stroke="#c8c8c8" stroke-width="1"/></svg>
<span id="t62" class="t" style="left:946.00px;top:390.91px;font-size:7.29px;color:#d6d6d6;font-weight:normal;transform:scaleX(1.0680);transform-origin:0 0;">不透明度 :</span>
<div class="a" style="left:981px;top:387.5px;width:29px;height:13.5px;background:#3b3b3b;border:1px solid #5c5c5c;border-radius:2px 0 0 2px"></div>
<div class="a" style="left:1010px;top:387.5px;width:14px;height:13.5px;background:#3b3b3b;border:1px solid #5c5c5c;border-radius:0 2px 2px 0"></div>
<span id="t63" class="t" style="left:984.13px;top:390.87px;font-size:9.19px;color:#e0e0e0;font-weight:normal;transform:scaleX(0.8622);transform-origin:0 0;">100%</span>
<svg style="left:1014px;top:392.5px;" width="6" height="4" viewBox="0 0 6 4"><path d="M0.5 0.5 L3 3 L5.5 0.5" fill="none" stroke="#c8c8c8" stroke-width="1"/></svg>
<span id="t64" class="t" style="left:824.21px;top:411.77px;font-size:8.20px;color:#d6d6d6;font-weight:normal;transform:scaleX(0.9072);transform-origin:0 0;">ロック :</span>
<svg style="left:856px;top:411px;" width="8" height="8" viewBox="0 0 10 10"><rect x="0.5" y="0.5" width="9" height="9" fill="none" stroke="#9a9a9a" stroke-width="0.8"/><rect x="2" y="2" width="2" height="2" fill="#9a9a9a"/><rect x="6" y="2" width="2" height="2" fill="#9a9a9a"/><rect x="4" y="4" width="2" height="2" fill="#9a9a9a"/><rect x="2" y="6" width="2" height="2" fill="#9a9a9a"/><rect x="6" y="6" width="2" height="2" fill="#9a9a9a"/></svg>
<svg style="left:871.5px;top:410.5px;" width="9" height="9" viewBox="0 0 11 11"><path d="M10 0.5L4 7" stroke="#9a9a9a" stroke-width="1.4"/><path d="M4 6.5c-2 0-2.5 1.5-2.5 2.5L0.5 10.5c2 .2 4-.5 4.5-2.5z" fill="#9a9a9a"/></svg>
<svg style="left:886px;top:410.5px;" width="9.5" height="9.5" viewBox="0 0 11 11"><path d="M5.5 0.5L7.3 2.5H6.2V4.8H8.5V3.7L10.5 5.5 8.5 7.3V6.2H6.2V8.5H7.3L5.5 10.5 3.7 8.5H4.8V6.2H2.5V7.3L0.5 5.5 2.5 3.7V4.8H4.8V2.5H3.7z" fill="#d6d6d6"/></svg>
<svg style="left:901.5px;top:410px;" width="10.5" height="10.5" viewBox="0 0 11 11"><rect x="2.5" y="2.5" width="6" height="6" fill="none" stroke="#bdbdbd" stroke-width="1"/><path d="M0.5 2.5H2.5M8.5 2.5h2M0.5 8.5H2.5M8.5 8.5h2M2.5 0.5V2.5M8.5 0.5V2.5M2.5 8.5v2M8.5 8.5v2" stroke="#bdbdbd" stroke-width="0.9"/></svg>
<svg style="left:918.5px;top:410px;" width="8" height="9.6" viewBox="0 0 10 12"><rect x="0.5" y="5" width="9" height="6.5" fill="#d6d6d6"/><path d="M2.5 5V3.5a2.5 2.5 0 0 1 5 0V5" fill="none" stroke="#d6d6d6" stroke-width="1.3"/></svg>
<span id="t65" class="t" style="left:961.19px;top:412.42px;font-size:7.21px;color:#d6d6d6;font-weight:normal;transform:scaleX(1.0599);transform-origin:0 0;">塗り :</span>
<div class="a" style="left:981px;top:408.5px;width:29px;height:13px;background:#3b3b3b;border:1px solid #5c5c5c;border-radius:2px 0 0 2px"></div>
<div class="a" style="left:1010px;top:408.5px;width:14px;height:13px;background:#3b3b3b;border:1px solid #5c5c5c;border-radius:0 2px 2px 0"></div>
<span id="t66" class="t" style="left:984.13px;top:411.27px;font-size:9.19px;color:#e0e0e0;font-weight:normal;transform:scaleX(0.8622);transform-origin:0 0;">100%</span>
<svg style="left:1014px;top:413.5px;" width="6" height="4" viewBox="0 0 6 4"><path d="M0.5 0.5 L3 3 L5.5 0.5" fill="none" stroke="#c8c8c8" stroke-width="1"/></svg>
<div class="a" style="left:821px;top:426px;width:203px;height:1px;background:#474747;"></div>
<div class="a" style="left:821px;top:383.5px;width:203px;height:1px;background:#4a4a4a;"></div>
<div class="a" style="left:821px;top:404.3px;width:203px;height:1px;background:#4a4a4a;"></div>
<div class="a" style="left:821px;top:427px;width:192px;height:195px;background:#4d4d4d;"></div>
<div class="a" style="left:821.5px;top:427.7px;width:191.5px;height:18.1px;background:#444444;"></div>
<svg style="left:826.5px;top:433.0px;" width="11" height="7" viewBox="0 0 11 7"><path d="M0.5 3.5Q5.5-2.5 10.5 3.5Q5.5 9.5 0.5 3.5z" fill="#dcdcdc"/><circle cx="5.5" cy="3.5" r="1.9" fill="#3c3c3c"/><circle cx="5.5" cy="3.5" r="0.9" fill="#dcdcdc"/></svg>
<svg style="left:844.5px;top:434.5px;" width="7" height="4" viewBox="0 0 7 4"><path d="M0.5 0.5 L3.5 3.3 L6.5 0.5" fill="none" stroke="#bdbdbd" stroke-width="1"/></svg>
<span id="t67" class="t" style="left:857.69px;top:432.52px;font-size:7.21px;color:#e8e8e8;font-weight:bold;transform:scaleX(1.0523);transform-origin:0 0;">アートボード 2</span>
<div class="a" style="left:821.5px;top:445.8px;width:21px;height:28.9px;background:#535353;border-top:1px solid #474747"></div>
<div class="a" style="left:842.5px;top:445.8px;width:170.5px;height:28.9px;background:#6a6a6a;border-top:1px solid #474747"></div>
<svg style="left:826.5px;top:457.0px;" width="11" height="7" viewBox="0 0 11 7"><path d="M0.5 3.5Q5.5-2.5 10.5 3.5Q5.5 9.5 0.5 3.5z" fill="#dcdcdc"/><circle cx="5.5" cy="3.5" r="1.9" fill="#3c3c3c"/><circle cx="5.5" cy="3.5" r="0.9" fill="#dcdcdc"/></svg>
<div class="a" style="left:855px;top:447.1px;width:21px;height:26px;background:#d6d6d6;border-radius:1.5px"></div>
<div class="a" style="left:856.3px;top:448.4px;width:18.4px;height:23.4px;background:#2a2a2a;"></div>
<svg style="left:857.3px;top:449.4px;" width="16.4" height="21.4" viewBox="0 0 16.4 21.4"><defs><pattern id="chk" width="3" height="3" patternUnits="userSpaceOnUse"><rect width="3" height="3" fill="#fff"/><rect width="1.5" height="1.5" fill="#d0d0d0"/><rect x="1.5" y="1.5" width="1.5" height="1.5" fill="#d0d0d0"/></pattern></defs><rect width="16.4" height="21.4" fill="url(#chk)"/><rect x="0" y="11" width="5.4" height="10.4" fill="#fff"/><rect x="5.4" y="11.4" width="11" height="10" fill="#2e2e2e"/><rect x="7.6" y="13.4" width="6.6" height="6.2" rx="1.2" fill="#6a6a6a" stroke="#bdbdbd" stroke-width="0.8"/></svg>
<span id="t68" class="t" style="left:880.19px;top:458.26px;font-size:7.56px;color:#e6e6e6;font-weight:normal;transform:scaleX(0.8948);transform-origin:0 0;">長方形 1</span>
<div class="a" style="left:821.5px;top:474.7px;width:191.5px;height:29.1px;background:#535353;border-top:1px solid #474747"></div>
<div class="a" style="left:842.5px;top:474.7px;width:1px;height:29.1px;background:#484848;"></div>
<svg style="left:826.5px;top:486.0px;" width="11" height="7" viewBox="0 0 11 7"><path d="M0.5 3.5Q5.5-2.5 10.5 3.5Q5.5 9.5 0.5 3.5z" fill="#dcdcdc"/><circle cx="5.5" cy="3.5" r="1.9" fill="#3c3c3c"/><circle cx="5.5" cy="3.5" r="0.9" fill="#dcdcdc"/></svg>
<svg style="left:857px;top:478.4px;outline:1px solid #262626" width="17" height="22.3" viewBox="0 0 17 22.3"><rect width="17" height="22.3" fill="#f4e24a"/><g stroke="#3d8fd0" stroke-width="1.1" stroke-dasharray="1.2 0.6"><path d="M1.5 2.2H15.5M1.5 4.6H14M1.5 7H15.5M1.5 9.2H13"/></g><rect y="10.6" width="17" height="8" fill="#3a8dd5"/><text x="2.5" y="17.3" font-size="6.4" font-weight="bold" fill="#f4e24a" font-family="Liberation Sans">33</text><path d="M4 12H10" stroke="#f4e24a" stroke-width="1"/><ellipse cx="13.3" cy="13" rx="2.3" ry="1.6" fill="#fff"/><path d="M11.5 16.5h4" stroke="#f4e24a" stroke-width="1.3"/><path d="M2 20.3H15" stroke="#7aa7c0" stroke-width="0.8" stroke-dasharray="1 0.5"/></svg>
<span id="t69" class="t" style="left:879.09px;top:485.44px;font-size:8.36px;color:#dcdcdc;font-weight:normal;transform:scaleX(0.9147);transform-origin:0 0;">レイヤー 2</span>
<div class="a" style="left:821.5px;top:503.8px;width:191.5px;height:19.5px;background:#444444;border-top:1px solid #474747"></div>
<svg style="left:826.5px;top:510.0px;" width="11" height="7" viewBox="0 0 11 7"><path d="M0.5 3.5Q5.5-2.5 10.5 3.5Q5.5 9.5 0.5 3.5z" fill="#dcdcdc"/><circle cx="5.5" cy="3.5" r="1.9" fill="#3c3c3c"/><circle cx="5.5" cy="3.5" r="0.9" fill="#dcdcdc"/></svg>
<svg style="left:844.5px;top:511.5px;" width="7" height="4" viewBox="0 0 7 4"><path d="M0.5 0.5 L3.5 3.3 L6.5 0.5" fill="none" stroke="#bdbdbd" stroke-width="1"/></svg>
<span id="t70" class="t" style="left:857.80px;top:511.46px;font-size:6.94px;color:#e8e8e8;font-weight:bold;transform:scaleX(1.0087);transform-origin:0 0;">アートボード 1</span>
<div class="a" style="left:821.5px;top:523.3px;width:191.5px;height:29.1px;background:#535353;border-top:1px solid #474747"></div>
<div class="a" style="left:842.5px;top:523.3px;width:1px;height:29.1px;background:#484848;"></div>
<svg style="left:826.5px;top:534.5px;" width="11" height="7" viewBox="0 0 11 7"><path d="M0.5 3.5Q5.5-2.5 10.5 3.5Q5.5 9.5 0.5 3.5z" fill="#dcdcdc"/><circle cx="5.5" cy="3.5" r="1.9" fill="#3c3c3c"/><circle cx="5.5" cy="3.5" r="0.9" fill="#dcdcdc"/></svg>
<svg style="left:856.8px;top:525.8px;outline:1px solid #262626" width="17" height="22.6" viewBox="0 0 17 22.3"><rect width="17" height="22.3" fill="#f4e24a"/><g stroke="#3d8fd0" stroke-width="1.1" stroke-dasharray="1.2 0.6"><path d="M1.5 2.2H15.5M1.5 4.6H14M1.5 7H15.5M1.5 9.2H13"/></g><rect y="10.6" width="17" height="8" fill="#3a8dd5"/><text x="2.5" y="17.3" font-size="6.4" font-weight="bold" fill="#f4e24a" font-family="Liberation Sans">33</text><path d="M4 12H10" stroke="#f4e24a" stroke-width="1"/><ellipse cx="13.3" cy="13" rx="2.3" ry="1.6" fill="#fff"/><path d="M11.5 16.5h4" stroke="#f4e24a" stroke-width="1.3"/><path d="M2 20.3H15" stroke="#7aa7c0" stroke-width="0.8" stroke-dasharray="1 0.5"/></svg>
<span id="t71" class="t" style="left:879.05px;top:534.97px;font-size:8.20px;color:#dcdcdc;font-weight:normal;transform:scaleX(0.9209);transform-origin:0 0;">レイヤー 1</span>
<div class="a" style="left:821.5px;top:552.4px;width:191.5px;height:1px;background:#474747;"></div>
<div class="a" style="left:1013px;top:427px;width:11px;height:195px;background:#535353;"></div>
<div class="a" style="left:821px;top:622px;width:203px;height:18px;background:#535353;border-top:1px solid #3e3e3e"></div>
<svg style="left:878.5px;top:627.5px;" width="11" height="6" viewBox="0 0 13 7"><rect x="0.6" y="0.6" width="6" height="5.8" rx="2.9" fill="none" stroke="#9a9a9a" stroke-width="1.1"/><rect x="6.4" y="0.6" width="6" height="5.8" rx="2.9" fill="none" stroke="#9a9a9a" stroke-width="1.1"/></svg>
<span id="t72" class="t" style="left:899.50px;top:625.96px;font-size:9.50px;color:#c0c0c0;font-weight:normal;"><i>fx</i></span>
<div class="a" style="left:908px;top:634.5px;width:1.5px;height:1px;background:#c0c0c0;"></div>
<svg style="left:918px;top:627px;" width="9.5" height="7.5" viewBox="0 0 12 10"><rect x="0.5" y="0.5" width="11" height="9" fill="#d6d6d6"/><ellipse cx="6" cy="5" rx="3" ry="2.7" fill="#535353"/></svg>
<svg style="left:938px;top:626.3px;" width="9" height="9" viewBox="0 0 11 11"><circle cx="5.5" cy="5.5" r="4.6" fill="none" stroke="#d6d6d6" stroke-width="1.1"/><path d="M5.5 0.9A4.6 4.6 0 0 0 5.5 10.1z" fill="#d6d6d6" transform="rotate(45 5.5 5.5)"/><rect x="9" y="10" width="2" height="1" fill="#d6d6d6"/></svg>
<svg style="left:956px;top:627.2px;" width="9.6" height="7.5" viewBox="0 0 12 10"><path d="M0.5 1.5H4.5L5.5 3H11.5V9.5H0.5z" fill="#d6d6d6"/></svg>
<svg style="left:975.8px;top:626px;" width="8.6" height="8.6" viewBox="0 0 11 11"><rect x="0.6" y="0.6" width="9.8" height="9.8" fill="none" stroke="#d6d6d6" stroke-width="1.1"/><path d="M5.5 2.8V8.2M2.8 5.5H8.2" stroke="#d6d6d6" stroke-width="1.1"/></svg>
<svg style="left:995.5px;top:625.7px;" width="7.5" height="9.3" viewBox="0 0 11 12"><path d="M1 2.5H10M4 2.5V1H7V2.5M2 3.5L2.7 11.5H8.3L9 3.5z" fill="none" stroke="#d6d6d6" stroke-width="1.1"/><path d="M4.3 5V10M6.7 5V10" stroke="#d6d6d6" stroke-width="0.8"/></svg>
</body></html>
